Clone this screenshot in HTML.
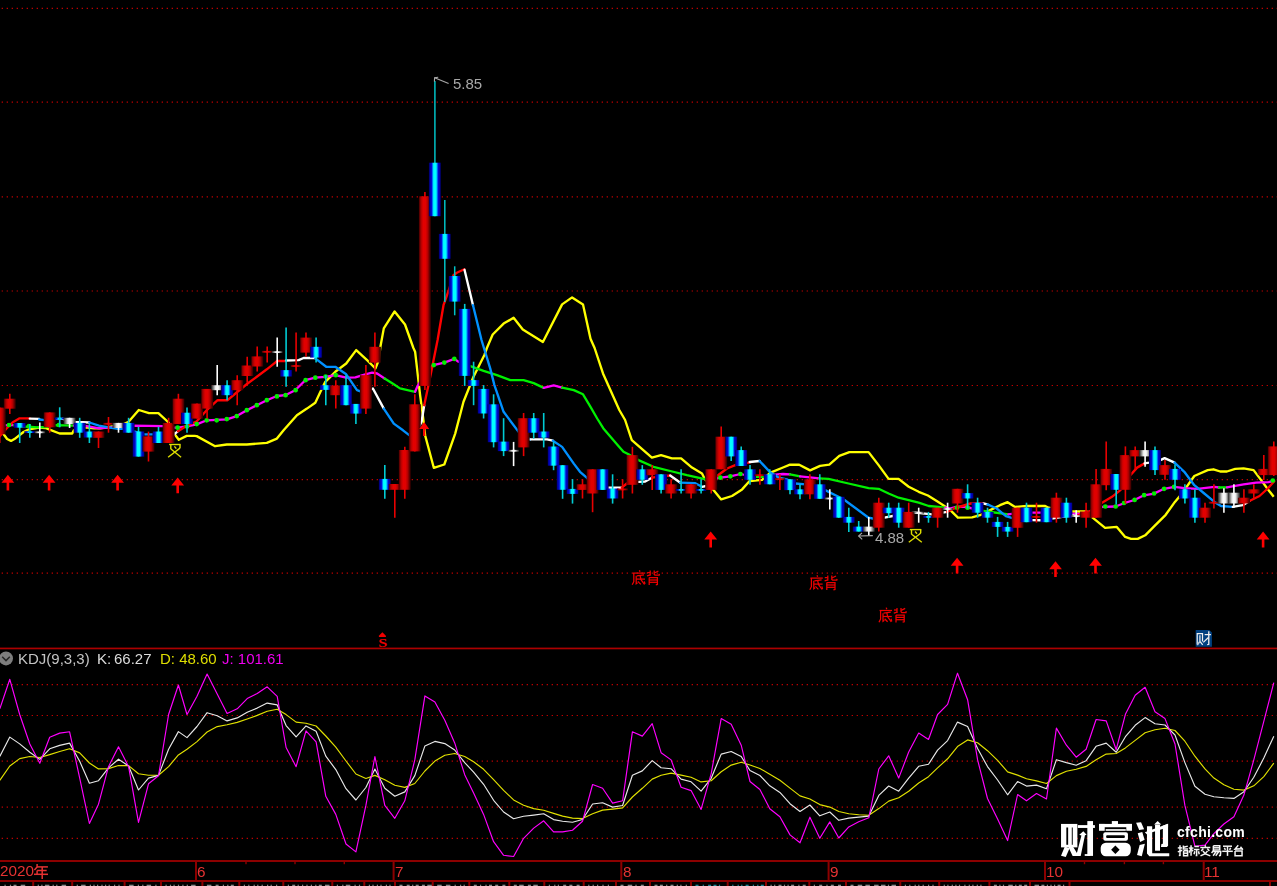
<!DOCTYPE html>
<html><head><meta charset="utf-8"><title>chart</title>
<style>
html,body{margin:0;padding:0;background:#000;overflow:hidden}
body{width:1277px;height:886px;position:relative;font-family:"Liberation Sans",sans-serif}
.t{position:absolute;white-space:pre;line-height:1;font-size:15px;will-change:transform;transform:translateZ(0)}
</style></head><body>
<svg width="1277" height="886" viewBox="0 0 1277 886" style="position:absolute;left:0;top:0">
<defs>
<linearGradient id="gr" x1="0" x2="1" y1="0" y2="0"><stop offset="0" stop-color="#300000"/><stop offset="0.1" stop-color="#880000"/><stop offset="0.25" stop-color="#c80000"/><stop offset="0.38" stop-color="#e20000"/><stop offset="0.57" stop-color="#e00000"/><stop offset="0.74" stop-color="#b00000"/><stop offset="0.89" stop-color="#600000"/><stop offset="1" stop-color="#280000"/></linearGradient>
<linearGradient id="gb" x1="0" x2="1" y1="0" y2="0"><stop offset="0" stop-color="#000040"/><stop offset="0.08" stop-color="#0000a0"/><stop offset="0.22" stop-color="#0008d4"/><stop offset="0.33" stop-color="#00a0ff"/><stop offset="0.4" stop-color="#00ffff"/><stop offset="0.6" stop-color="#00ffff"/><stop offset="0.68" stop-color="#0098ff"/><stop offset="0.78" stop-color="#0008d0"/><stop offset="0.92" stop-color="#0000a0"/><stop offset="1" stop-color="#000040"/></linearGradient>
<linearGradient id="gw" x1="0" x2="1" y1="0" y2="0"><stop offset="0" stop-color="#202020"/><stop offset="0.15" stop-color="#707070"/><stop offset="0.35" stop-color="#e8e8e8"/><stop offset="0.5" stop-color="#ffffff"/><stop offset="0.65" stop-color="#e8e8e8"/><stop offset="0.85" stop-color="#707070"/><stop offset="1" stop-color="#202020"/></linearGradient>
</defs>
<rect width="1277" height="886" fill="#000"/>
<line x1="1.7" x2="1277" y1="8.35" y2="8.35" stroke="#d00000" stroke-width="1.2" stroke-dasharray="1.2 3.8"/>
<line x1="1.7" x2="1277" y1="102.10" y2="102.10" stroke="#d00000" stroke-width="1.2" stroke-dasharray="1.2 3.8"/>
<line x1="1.7" x2="1277" y1="196.90" y2="196.90" stroke="#d00000" stroke-width="1.2" stroke-dasharray="1.2 3.8"/>
<line x1="1.7" x2="1277" y1="291.00" y2="291.00" stroke="#d00000" stroke-width="1.2" stroke-dasharray="1.2 3.8"/>
<line x1="1.7" x2="1277" y1="385.50" y2="385.50" stroke="#d00000" stroke-width="1.2" stroke-dasharray="1.2 3.8"/>
<line x1="1.7" x2="1277" y1="479.60" y2="479.60" stroke="#d00000" stroke-width="1.2" stroke-dasharray="1.2 3.8"/>
<line x1="1.7" x2="1277" y1="573.20" y2="573.20" stroke="#d00000" stroke-width="1.2" stroke-dasharray="1.2 3.8"/>
<line x1="1.7" x2="1277" y1="684.60" y2="684.60" stroke="#d00000" stroke-width="1.2" stroke-dasharray="1.2 3.8"/>
<line x1="1.7" x2="1277" y1="715.50" y2="715.50" stroke="#d00000" stroke-width="1.2" stroke-dasharray="1.2 3.8"/>
<line x1="1.7" x2="1277" y1="761.10" y2="761.10" stroke="#d00000" stroke-width="1.2" stroke-dasharray="1.2 3.8"/>
<line x1="1.7" x2="1277" y1="807.20" y2="807.20" stroke="#d00000" stroke-width="1.2" stroke-dasharray="1.2 3.8"/>
<line x1="1.7" x2="1277" y1="838.40" y2="838.40" stroke="#d00000" stroke-width="1.2" stroke-dasharray="1.2 3.8"/>
<polyline points="0.0,432.0 3.1,433.5 7.1,439.0 11.0,440.9 15.7,438.2 23.5,432.0 29.0,429.3 39.2,427.7 45.5,428.0 50.2,429.9 59.6,433.5 72.2,433.5 73.7,430.4 85.5,427.3 94.1,428.4 100.4,428.4 109.8,426.8 123.9,424.1 128.6,421.8 138.8,410.0 149.0,413.1 158.4,413.1 168.6,422.5 174.1,433.5 178.8,439.8 186.7,435.9 194.5,435.9 196.7,436.1 215.1,446.2 226.8,444.5 246.8,444.5 266.8,442.8 276.9,438.6 283.6,430.3 296.9,415.2 306.9,408.6 315.3,402.7 320.3,391.9 325.3,381.8 335.3,371.8 346.2,363.5 356.2,350.1 367.1,360.1 375.4,368.5 378.8,360.1 380.4,346.8 383.8,328.4 394.6,311.4 405.0,324.5 413.4,348.0 415.1,351.7 417.6,373.4 420.1,395.1 422.6,413.5 425.1,435.2 433.8,467.8 444.3,464.5 455.2,433.6 463.5,401.8 473.5,376.8 484.4,355.0 486.9,348.0 492.7,334.5 503.6,323.6 513.6,317.8 522.8,329.5 542.9,342.0 562.1,304.4 572.1,297.4 583.0,304.4 590.5,338.7 594.6,348.0 603.0,373.4 619.3,410.0 625.1,420.0 631.8,440.1 651.9,457.6 661.0,455.1 671.9,458.4 681.1,458.4 692.0,467.6 702.0,473.5 704.5,478.5 713.7,490.2 721.2,499.4 732.0,496.0 742.1,489.4 749.6,481.0 762.1,479.8 770.5,472.6 783.0,467.5 790.0,464.7 799.2,464.7 810.1,470.4 820.1,465.9 829.3,464.7 839.3,455.9 849.4,452.1 868.6,452.1 878.6,465.1 888.6,478.9 898.6,478.9 908.7,486.8 918.7,491.8 927.9,495.5 937.9,501.8 947.1,507.7 952.1,511.9 957.9,517.7 972.1,517.4 980.0,515.2 991.7,509.4 1000.0,505.2 1007.6,502.2 1015.1,506.9 1026.8,506.0 1045.2,506.0 1048.5,507.7 1071.9,511.5 1086.9,511.5 1092.6,517.7 1105.1,527.8 1116.8,526.9 1125.2,536.9 1131.0,538.9 1137.7,538.9 1145.2,535.3 1153.6,526.9 1165.7,514.8 1174.9,501.9 1182.6,492.7 1194.3,476.0 1207.7,470.1 1213.5,469.3 1220.2,471.5 1226.9,471.5 1235.2,468.8 1243.6,468.4 1253.6,470.1 1261.1,480.1 1268.6,490.2 1273.7,496.8" fill="none" stroke="#ffff00" stroke-width="2.35" stroke-linejoin="round"/>
<polyline points="0.0,425.4 14.0,425.2" fill="none" stroke="#ff00ff" stroke-width="2.3" stroke-linejoin="round" stroke-linecap="round"/>
<polyline points="14.0,425.2 23.5,426.5 38.0,427.3 45.0,427.0 56.0,425.2 74.0,425.7" fill="none" stroke="#00f000" stroke-width="2.3" stroke-linejoin="round" stroke-linecap="round"/>
<polyline points="74.0,425.7 84.0,425.7 99.0,428.4 108.0,427.7 120.0,426.5 133.0,425.7 163.0,426.2 172.0,427.5 177.6,427.7 187.0,426.5 196.7,424.4 206.7,420.3 226.8,419.4 236.8,416.1 246.8,410.2 256.8,405.2 266.8,400.2 276.9,396.0 285.2,395.2 295.2,390.2 305.3,380.2 315.3,377.7 325.3,376.8 335.3,375.2 346.2,377.7 355.4,377.3 365.4,374.3 372.1,372.6 377.1,373.5 384.6,378.5" fill="none" stroke="#ff00ff" stroke-width="2.3" stroke-linejoin="round" stroke-linecap="round"/>
<polyline points="384.6,378.5 393.8,384.3 400.0,388.4 415.1,391.8" fill="none" stroke="#00f000" stroke-width="2.3" stroke-linejoin="round" stroke-linecap="round"/>
<polyline points="415.1,391.8 417.6,386.0 424.0,375.0 430.9,366.7 433.4,365.1 444.3,362.6 454.3,358.9 458.5,361.7 464.0,364.0" fill="none" stroke="#ff00ff" stroke-width="2.3" stroke-linejoin="round" stroke-linecap="round"/>
<polyline points="464.0,364.0 471.0,366.4 483.6,370.9 496.9,375.1 510.3,380.1 523.6,380.1 533.7,383.1 543.7,387.9" fill="none" stroke="#00f000" stroke-width="2.3" stroke-linejoin="round" stroke-linecap="round"/>
<polyline points="543.7,387.9 553.7,385.4 562.1,387.6" fill="none" stroke="#ff00ff" stroke-width="2.3" stroke-linejoin="round" stroke-linecap="round"/>
<polyline points="562.1,387.6 573.8,390.1 583.0,394.3 590.5,406.8 597.2,418.5 603.4,428.4 618.4,445.9 623.5,451.8 628.5,454.3 638.5,460.1 653.5,466.8 670.2,471.0 686.9,475.2 703.6,478.8 712.0,479.0" fill="none" stroke="#00f000" stroke-width="2.3" stroke-linejoin="round" stroke-linecap="round"/>
<polyline points="712.0,479.0 720.4,477.7 730.4,476.3 740.4,474.0 745.0,475.0" fill="none" stroke="#ff00ff" stroke-width="2.3" stroke-linejoin="round" stroke-linecap="round"/>
<polyline points="745.0,475.0 755.4,476.8 763.8,476.8 770.0,475.5" fill="none" stroke="#00f000" stroke-width="2.3" stroke-linejoin="round" stroke-linecap="round"/>
<polyline points="770.0,475.5 777.2,474.3 783.0,474.0 790.0,474.3" fill="none" stroke="#ff00ff" stroke-width="2.3" stroke-linejoin="round" stroke-linecap="round"/>
<polyline points="790.0,474.3 800.1,476.4" fill="none" stroke="#00f000" stroke-width="2.3" stroke-linejoin="round" stroke-linecap="round"/>
<polyline points="800.1,476.4 819.3,478.4" fill="none" stroke="#ff00ff" stroke-width="2.3" stroke-linejoin="round" stroke-linecap="round"/>
<polyline points="819.3,478.4 828.5,478.8 848.5,483.5 868.6,488.1 878.6,488.8 888.6,493.5 898.6,497.7 918.7,502.7 928.7,506.0 945.4,507.7" fill="none" stroke="#00f000" stroke-width="2.3" stroke-linejoin="round" stroke-linecap="round"/>
<polyline points="945.4,507.7 949.6,508.5 955.4,507.2 963.0,506.5 975.0,509.0 983.4,511.0" fill="none" stroke="#ff00ff" stroke-width="2.3" stroke-linejoin="round" stroke-linecap="round"/>
<polyline points="983.4,511.0 1008.4,514.4" fill="none" stroke="#00f000" stroke-width="2.3" stroke-linejoin="round" stroke-linecap="round"/>
<polyline points="1008.4,514.4 1011.8,513.9 1031.8,512.7 1041.8,512.7 1071.9,513.6 1080.3,513.9 1092.0,511.0 1102.4,506.9 1115.5,506.5 1124.0,503.2 1134.4,500.0 1144.0,495.3 1154.0,493.6 1164.0,488.8 1174.4,486.8 1184.3,488.2 1197.6,488.8 1214.4,486.8 1219.0,487.5" fill="none" stroke="#ff00ff" stroke-width="2.3" stroke-linejoin="round" stroke-linecap="round"/>
<polyline points="1219.0,487.5 1227.0,487.3" fill="none" stroke="#00f000" stroke-width="2.3" stroke-linejoin="round" stroke-linecap="round"/>
<polyline points="1227.0,487.3 1243.6,484.3 1256.1,482.6 1268.6,482.1 1273.8,480.8" fill="none" stroke="#ff00ff" stroke-width="2.3" stroke-linejoin="round" stroke-linecap="round"/>
<polyline points="0.0,435.9 6.3,428.8 12.5,422.5 19.6,418.3 29.8,418.3" fill="none" stroke="#ff0000" stroke-width="2.35" stroke-linejoin="round" stroke-linecap="round"/>
<polyline points="29.8,418.6 39.2,418.9" fill="none" stroke="#ffffff" stroke-width="2.35" stroke-linejoin="round" stroke-linecap="round"/>
<polyline points="39.2,419.5 44.7,420.2 55.2,418.9 62.7,418.9" fill="none" stroke="#0090ff" stroke-width="2.35" stroke-linejoin="round" stroke-linecap="round"/>
<polyline points="62.7,418.9 75.3,421.8 89.4,422.5" fill="none" stroke="#ffffff" stroke-width="2.35" stroke-linejoin="round" stroke-linecap="round"/>
<polyline points="89.4,422.5 98.8,425.7 117.6,428.8 123.9,428.8 134.0,431.5 144.3,434.3 152.9,434.3 163.0,434.3" fill="none" stroke="#0090ff" stroke-width="2.35" stroke-linejoin="round" stroke-linecap="round"/>
<polyline points="163.0,434.3 174.1,434.3 178.0,431.2" fill="none" stroke="#ffffff" stroke-width="2.35" stroke-linejoin="round" stroke-linecap="round"/>
<polyline points="178.0,431.2 186.7,425.7 196.5,421.5 206.7,410.2 217.6,400.2 227.6,400.2 238.4,391.0 247.6,383.5 256.8,376.8 266.8,369.3 275.2,362.6 276.9,361.0 286.0,361.0" fill="none" stroke="#ff0000" stroke-width="2.35" stroke-linejoin="round" stroke-linecap="round"/>
<polyline points="286.0,360.5 298.6,360.1 303.6,358.0 315.3,358.0" fill="none" stroke="#ffffff" stroke-width="2.35" stroke-linejoin="round" stroke-linecap="round"/>
<polyline points="315.3,358.4 326.2,366.8 335.3,366.8 346.2,374.3 357.0,390.2 360.4,391.4 366.0,391.0" fill="none" stroke="#0090ff" stroke-width="2.35" stroke-linejoin="round" stroke-linecap="round"/>
<polyline points="366.0,391.0 372.9,388.5 383.8,408.6" fill="none" stroke="#ffffff" stroke-width="2.35" stroke-linejoin="round" stroke-linecap="round"/>
<polyline points="383.8,408.6 393.8,423.6 403.0,430.3 409.2,435.2 414.8,437.0" fill="none" stroke="#0090ff" stroke-width="2.35" stroke-linejoin="round" stroke-linecap="round"/>
<polyline points="414.8,437.0 421.7,421.0 424.2,405.2" fill="none" stroke="#ffffff" stroke-width="2.35" stroke-linejoin="round" stroke-linecap="round"/>
<polyline points="424.2,405.2 430.9,373.4 437.6,340.0 443.5,305.2 448.5,291.0 453.5,275.2 456.8,272.7 464.3,269.3" fill="none" stroke="#ff0000" stroke-width="2.35" stroke-linejoin="round" stroke-linecap="round"/>
<polyline points="464.5,269.8 473.0,305.2" fill="none" stroke="#ffffff" stroke-width="2.35" stroke-linejoin="round" stroke-linecap="round"/>
<polyline points="473.0,305.2 481.5,340.0 490.2,368.4 494.4,385.1 503.6,411.8 518.6,431.9 530.3,439.4" fill="none" stroke="#0090ff" stroke-width="2.35" stroke-linejoin="round" stroke-linecap="round"/>
<polyline points="530.3,439.4 547.0,439.4 552.9,440.7" fill="none" stroke="#ffffff" stroke-width="2.35" stroke-linejoin="round" stroke-linecap="round"/>
<polyline points="552.9,440.7 562.1,446.9 573.8,463.6 580.0,471.8 586.7,477.7 596.0,484.0 607.0,487.7" fill="none" stroke="#0090ff" stroke-width="2.35" stroke-linejoin="round" stroke-linecap="round"/>
<polyline points="607.0,487.7 621.8,487.7" fill="none" stroke="#ffffff" stroke-width="2.35" stroke-linejoin="round" stroke-linecap="round"/>
<polyline points="621.8,487.7 626.8,483.5 632.0,482.0" fill="none" stroke="#ff0000" stroke-width="2.35" stroke-linejoin="round" stroke-linecap="round"/>
<polyline points="632.0,482.0 638.5,481.8 645.2,481.5 651.9,477.7" fill="none" stroke="#ffffff" stroke-width="2.35" stroke-linejoin="round" stroke-linecap="round"/>
<polyline points="651.9,477.7 661.0,476.5 670.2,475.5" fill="none" stroke="#ff0000" stroke-width="2.35" stroke-linejoin="round" stroke-linecap="round"/>
<polyline points="670.2,475.5 680.3,482.7" fill="none" stroke="#ffffff" stroke-width="2.35" stroke-linejoin="round" stroke-linecap="round"/>
<polyline points="680.3,482.7 695.3,483.2 702.0,486.8" fill="none" stroke="#0090ff" stroke-width="2.35" stroke-linejoin="round" stroke-linecap="round"/>
<polyline points="702.0,486.8 706.2,486.0 711.0,482.0" fill="none" stroke="#ffffff" stroke-width="2.35" stroke-linejoin="round" stroke-linecap="round"/>
<polyline points="711.0,482.0 717.0,476.0 727.0,468.5 737.1,464.3 749.6,462.6" fill="none" stroke="#ff0000" stroke-width="2.35" stroke-linejoin="round" stroke-linecap="round"/>
<polyline points="749.6,462.0 759.6,461.0" fill="none" stroke="#ffffff" stroke-width="2.35" stroke-linejoin="round" stroke-linecap="round"/>
<polyline points="759.6,461.0 770.5,472.6 778.8,477.7 786.7,479.3 795.1,483.5 805.9,484.3 815.0,487.0 825.1,490.1 843.5,499.3 868.6,517.7 872.7,518.5 878.0,519.0" fill="none" stroke="#0090ff" stroke-width="2.35" stroke-linejoin="round" stroke-linecap="round"/>
<polyline points="878.0,519.0 884.4,517.7 892.8,516.0 905.0,514.0 915.3,512.7 932.0,514.4 947.1,511.9" fill="none" stroke="#ffffff" stroke-width="2.35" stroke-linejoin="round" stroke-linecap="round"/>
<polyline points="947.1,511.9 953.8,508.5 970.5,503.5 983.4,503.5" fill="none" stroke="#ff0000" stroke-width="2.35" stroke-linejoin="round" stroke-linecap="round"/>
<polyline points="983.4,503.5 987.5,504.4" fill="none" stroke="#ffffff" stroke-width="2.35" stroke-linejoin="round" stroke-linecap="round"/>
<polyline points="987.5,504.4 996.7,508.5 1005.9,516.1 1010.9,517.7 1020.0,520.0" fill="none" stroke="#0090ff" stroke-width="2.35" stroke-linejoin="round" stroke-linecap="round"/>
<polyline points="1020.0,520.0 1031.8,520.2 1041.0,520.2 1055.0,518.0 1071.9,515.2 1076.9,516.1" fill="none" stroke="#ffffff" stroke-width="2.35" stroke-linejoin="round" stroke-linecap="round"/>
<polyline points="1076.9,516.1 1080.3,514.4 1090.3,511.0 1102.0,502.7 1112.0,496.8 1120.4,490.2 1130.4,475.1 1137.1,467.6 1144.6,463.4" fill="none" stroke="#ff0000" stroke-width="2.35" stroke-linejoin="round" stroke-linecap="round"/>
<polyline points="1144.6,463.4 1149.0,462.6 1160.4,460.1 1164.6,458.1 1174.6,462.6" fill="none" stroke="#ffffff" stroke-width="2.35" stroke-linejoin="round" stroke-linecap="round"/>
<polyline points="1174.6,462.6 1184.3,471.8 1194.3,485.2 1204.3,493.5 1214.4,501.9 1221.0,506.0 1232.7,506.9" fill="none" stroke="#0090ff" stroke-width="2.35" stroke-linejoin="round" stroke-linecap="round"/>
<polyline points="1232.7,506.9 1242.8,505.2 1249.4,501.0" fill="none" stroke="#ffffff" stroke-width="2.35" stroke-linejoin="round" stroke-linecap="round"/>
<polyline points="1249.4,501.0 1259.5,496.0 1267.8,488.5 1274.2,481.3" fill="none" stroke="#ff0000" stroke-width="2.35" stroke-linejoin="round" stroke-linecap="round"/>
<circle cx="9.0" cy="425.0" r="2.35" fill="#00f000"/>
<circle cx="29.0" cy="426.2" r="2.35" fill="#00f000"/>
<circle cx="58.8" cy="425.0" r="2.35" fill="#00f000"/>
<circle cx="177.6" cy="427.7" r="2.35" fill="#00f000"/>
<circle cx="187.0" cy="426.5" r="2.35" fill="#00f000"/>
<circle cx="196.7" cy="424.1" r="2.35" fill="#00f000"/>
<circle cx="206.7" cy="420.3" r="2.35" fill="#00f000"/>
<circle cx="216.7" cy="420.3" r="2.35" fill="#00f000"/>
<circle cx="226.8" cy="419.1" r="2.35" fill="#00f000"/>
<circle cx="236.8" cy="416.1" r="2.35" fill="#00f000"/>
<circle cx="246.8" cy="410.2" r="2.35" fill="#00f000"/>
<circle cx="256.8" cy="405.2" r="2.35" fill="#00f000"/>
<circle cx="266.8" cy="400.2" r="2.35" fill="#00f000"/>
<circle cx="276.9" cy="396.4" r="2.35" fill="#00f000"/>
<circle cx="285.6" cy="395.2" r="2.35" fill="#00f000"/>
<circle cx="295.6" cy="390.2" r="2.35" fill="#00f000"/>
<circle cx="305.6" cy="380.2" r="2.35" fill="#00f000"/>
<circle cx="315.3" cy="377.7" r="2.35" fill="#00f000"/>
<circle cx="325.6" cy="376.5" r="2.35" fill="#00f000"/>
<circle cx="335.8" cy="375.2" r="2.35" fill="#00f000"/>
<circle cx="433.8" cy="365.1" r="2.35" fill="#00f000"/>
<circle cx="444.3" cy="362.6" r="2.35" fill="#00f000"/>
<circle cx="454.3" cy="358.9" r="2.35" fill="#00f000"/>
<circle cx="720.4" cy="477.7" r="2.35" fill="#00f000"/>
<circle cx="730.4" cy="476.3" r="2.35" fill="#00f000"/>
<circle cx="740.4" cy="474.0" r="2.35" fill="#00f000"/>
<circle cx="957.1" cy="507.7" r="2.35" fill="#00f000"/>
<circle cx="967.6" cy="507.7" r="2.35" fill="#00f000"/>
<circle cx="1105.3" cy="506.5" r="2.35" fill="#00f000"/>
<circle cx="1115.7" cy="506.5" r="2.35" fill="#00f000"/>
<circle cx="1124.0" cy="503.0" r="2.35" fill="#00f000"/>
<circle cx="1134.6" cy="499.9" r="2.35" fill="#00f000"/>
<circle cx="1144.1" cy="495.2" r="2.35" fill="#00f000"/>
<circle cx="1154.1" cy="493.5" r="2.35" fill="#00f000"/>
<circle cx="1164.1" cy="488.8" r="2.35" fill="#00f000"/>
<circle cx="1174.1" cy="486.8" r="2.35" fill="#00f000"/>
<circle cx="1272.8" cy="480.5" r="2.35" fill="#00f000"/>
<line x1="-0.2" x2="-0.2" y1="407.6" y2="443.0" stroke="#e80000" stroke-width="1.6"/>
<rect x="-6.2" y="407.6" width="12.0" height="26.7" fill="url(#gr)"/>
<line x1="9.8" x2="9.8" y1="393.8" y2="413.9" stroke="#e80000" stroke-width="1.6"/>
<rect x="3.8" y="398.7" width="12.0" height="10.0" fill="url(#gr)"/>
<line x1="19.7" x2="19.7" y1="423.0" y2="443.0" stroke="#00ccd4" stroke-width="1.6"/>
<rect x="13.7" y="423.0" width="12.0" height="4.7" fill="url(#gb)"/>
<line x1="29.8" x2="29.8" y1="424.0" y2="437.8" stroke="#00ccd4" stroke-width="1.6"/>
<rect x="24.4" y="431.2" width="10.8" height="1.8" fill="url(#gb)"/>
<line x1="29.8" x2="29.8" y1="430.9" y2="433.2" stroke="#00ccd4" stroke-width="1.6"/>
<line x1="39.8" x2="39.8" y1="422.5" y2="437.8" stroke="#ffffff" stroke-width="1.6"/>
<rect x="34.4" y="431.4" width="10.8" height="1.8" fill="url(#gw)"/>
<line x1="39.8" x2="39.8" y1="431.1" y2="433.5" stroke="#ffffff" stroke-width="1.6"/>
<line x1="49.7" x2="49.7" y1="412.4" y2="432.7" stroke="#e80000" stroke-width="1.6"/>
<rect x="43.7" y="412.4" width="12.0" height="14.9" fill="url(#gr)"/>
<line x1="59.7" x2="59.7" y1="407.3" y2="427.3" stroke="#00ccd4" stroke-width="1.6"/>
<rect x="54.3" y="417.7" width="10.8" height="1.8" fill="url(#gb)"/>
<line x1="59.7" x2="59.7" y1="417.4" y2="419.8" stroke="#00ccd4" stroke-width="1.6"/>
<line x1="69.6" x2="69.6" y1="417.8" y2="428.0" stroke="#ffffff" stroke-width="1.6"/>
<rect x="63.6" y="417.8" width="12.0" height="6.3" fill="url(#gw)"/>
<line x1="79.7" x2="79.7" y1="417.8" y2="437.8" stroke="#00ccd4" stroke-width="1.6"/>
<rect x="73.7" y="422.9" width="12.0" height="9.8" fill="url(#gb)"/>
<line x1="89.4" x2="89.4" y1="424.1" y2="443.0" stroke="#00ccd4" stroke-width="1.6"/>
<rect x="83.4" y="431.5" width="12.0" height="6.0" fill="url(#gb)"/>
<line x1="98.5" x2="98.5" y1="431.5" y2="448.0" stroke="#e80000" stroke-width="1.6"/>
<rect x="92.5" y="431.5" width="12.0" height="6.3" fill="url(#gr)"/>
<line x1="108.5" x2="108.5" y1="417.0" y2="432.7" stroke="#e80000" stroke-width="1.6"/>
<rect x="103.1" y="422.9" width="10.8" height="1.8" fill="url(#gr)"/>
<line x1="108.5" x2="108.5" y1="422.6" y2="425.0" stroke="#e80000" stroke-width="1.6"/>
<line x1="118.5" x2="118.5" y1="422.9" y2="432.7" stroke="#ffffff" stroke-width="1.6"/>
<rect x="112.5" y="422.9" width="12.0" height="5.1" fill="url(#gw)"/>
<line x1="128.6" x2="128.6" y1="417.8" y2="432.7" stroke="#00ccd4" stroke-width="1.6"/>
<rect x="122.6" y="422.9" width="12.0" height="9.8" fill="url(#gb)"/>
<line x1="138.5" x2="138.5" y1="426.8" y2="456.6" stroke="#00ccd4" stroke-width="1.6"/>
<rect x="132.5" y="431.5" width="12.0" height="25.1" fill="url(#gb)"/>
<line x1="148.5" x2="148.5" y1="431.6" y2="461.5" stroke="#e80000" stroke-width="1.6"/>
<rect x="142.5" y="436.4" width="12.0" height="15.2" fill="url(#gr)"/>
<line x1="158.5" x2="158.5" y1="426.8" y2="443.0" stroke="#00ccd4" stroke-width="1.6"/>
<rect x="152.5" y="431.5" width="12.0" height="11.5" fill="url(#gb)"/>
<line x1="168.6" x2="168.6" y1="417.8" y2="443.0" stroke="#e80000" stroke-width="1.6"/>
<rect x="162.6" y="422.9" width="12.0" height="20.1" fill="url(#gr)"/>
<line x1="178.4" x2="178.4" y1="393.8" y2="424.0" stroke="#e80000" stroke-width="1.6"/>
<rect x="172.4" y="398.7" width="12.0" height="25.3" fill="url(#gr)"/>
<line x1="187.0" x2="187.0" y1="407.6" y2="432.7" stroke="#00ccd4" stroke-width="1.6"/>
<rect x="181.0" y="412.7" width="12.0" height="11.3" fill="url(#gb)"/>
<line x1="197.0" x2="197.0" y1="403.6" y2="418.6" stroke="#e80000" stroke-width="1.6"/>
<rect x="191.0" y="403.6" width="12.0" height="15.0" fill="url(#gr)"/>
<line x1="207.1" x2="207.1" y1="388.9" y2="418.6" stroke="#e80000" stroke-width="1.6"/>
<rect x="201.1" y="388.9" width="12.0" height="19.7" fill="url(#gr)"/>
<line x1="217.2" x2="217.2" y1="365.1" y2="395.2" stroke="#ffffff" stroke-width="1.6"/>
<rect x="211.2" y="385.2" width="12.0" height="5.0" fill="url(#gw)"/>
<line x1="227.1" x2="227.1" y1="380.2" y2="400.2" stroke="#00ccd4" stroke-width="1.6"/>
<rect x="221.1" y="385.2" width="12.0" height="10.0" fill="url(#gb)"/>
<line x1="237.2" x2="237.2" y1="375.2" y2="405.2" stroke="#e80000" stroke-width="1.6"/>
<rect x="231.2" y="380.2" width="12.0" height="10.0" fill="url(#gr)"/>
<line x1="247.2" x2="247.2" y1="356.8" y2="382.7" stroke="#e80000" stroke-width="1.6"/>
<rect x="241.2" y="365.5" width="12.0" height="10.5" fill="url(#gr)"/>
<line x1="257.2" x2="257.2" y1="346.4" y2="371.5" stroke="#e80000" stroke-width="1.6"/>
<rect x="251.2" y="356.4" width="12.0" height="10.1" fill="url(#gr)"/>
<line x1="267.2" x2="267.2" y1="346.4" y2="362.6" stroke="#e80000" stroke-width="1.6"/>
<rect x="261.8" y="350.9" width="10.8" height="1.8" fill="url(#gr)"/>
<line x1="267.2" x2="267.2" y1="350.6" y2="353.0" stroke="#e80000" stroke-width="1.6"/>
<line x1="277.2" x2="277.2" y1="337.6" y2="366.8" stroke="#ffffff" stroke-width="1.6"/>
<rect x="271.8" y="351.2" width="10.8" height="1.8" fill="url(#gw)"/>
<line x1="277.2" x2="277.2" y1="350.9" y2="353.3" stroke="#ffffff" stroke-width="1.6"/>
<line x1="286.1" x2="286.1" y1="327.5" y2="386.8" stroke="#00ccd4" stroke-width="1.6"/>
<rect x="280.1" y="370.1" width="12.0" height="6.4" fill="url(#gb)"/>
<line x1="296.1" x2="296.1" y1="332.6" y2="371.5" stroke="#e80000" stroke-width="1.6"/>
<rect x="290.7" y="365.1" width="10.8" height="1.8" fill="url(#gr)"/>
<line x1="296.1" x2="296.1" y1="364.8" y2="367.2" stroke="#e80000" stroke-width="1.6"/>
<line x1="306.0" x2="306.0" y1="332.6" y2="356.8" stroke="#e80000" stroke-width="1.6"/>
<rect x="300.0" y="337.6" width="12.0" height="15.0" fill="url(#gr)"/>
<line x1="316.1" x2="316.1" y1="337.6" y2="362.6" stroke="#00ccd4" stroke-width="1.6"/>
<rect x="310.1" y="346.8" width="12.0" height="10.8" fill="url(#gb)"/>
<line x1="325.8" x2="325.8" y1="375.2" y2="405.2" stroke="#00ccd4" stroke-width="1.6"/>
<rect x="319.8" y="385.2" width="12.0" height="4.7" fill="url(#gb)"/>
<line x1="335.8" x2="335.8" y1="380.2" y2="408.6" stroke="#e80000" stroke-width="1.6"/>
<rect x="329.8" y="385.5" width="12.0" height="9.7" fill="url(#gr)"/>
<line x1="346.0" x2="346.0" y1="375.2" y2="405.2" stroke="#00ccd4" stroke-width="1.6"/>
<rect x="340.0" y="385.2" width="12.0" height="20.0" fill="url(#gb)"/>
<line x1="355.9" x2="355.9" y1="403.9" y2="423.9" stroke="#00ccd4" stroke-width="1.6"/>
<rect x="349.9" y="403.9" width="12.0" height="9.7" fill="url(#gb)"/>
<line x1="365.9" x2="365.9" y1="365.1" y2="413.9" stroke="#e80000" stroke-width="1.6"/>
<rect x="359.9" y="375.2" width="12.0" height="33.4" fill="url(#gr)"/>
<line x1="374.9" x2="374.9" y1="332.6" y2="386.8" stroke="#e80000" stroke-width="1.6"/>
<rect x="368.9" y="346.8" width="12.0" height="15.8" fill="url(#gr)"/>
<line x1="384.8" x2="384.8" y1="465.1" y2="498.8" stroke="#00ccd4" stroke-width="1.6"/>
<rect x="378.8" y="478.9" width="12.0" height="10.9" fill="url(#gb)"/>
<line x1="394.8" x2="394.8" y1="484.0" y2="517.7" stroke="#e80000" stroke-width="1.6"/>
<rect x="388.8" y="484.0" width="12.0" height="5.8" fill="url(#gr)"/>
<line x1="404.8" x2="404.8" y1="446.7" y2="498.8" stroke="#e80000" stroke-width="1.6"/>
<rect x="398.8" y="450.0" width="12.0" height="39.8" fill="url(#gr)"/>
<line x1="414.8" x2="414.8" y1="394.3" y2="451.4" stroke="#e80000" stroke-width="1.6"/>
<rect x="408.8" y="404.3" width="12.0" height="47.1" fill="url(#gr)"/>
<line x1="424.9" x2="424.9" y1="192.0" y2="390.1" stroke="#e80000" stroke-width="1.6"/>
<rect x="418.9" y="196.3" width="12.0" height="189.6" fill="url(#gr)"/>
<line x1="434.9" x2="434.9" y1="80.9" y2="216.2" stroke="#00c2c6" stroke-width="1.5"/>
<rect x="428.9" y="162.7" width="12.0" height="53.5" fill="url(#gb)"/>
<line x1="444.8" x2="444.8" y1="200.0" y2="301.9" stroke="#00c2c6" stroke-width="1.5"/>
<rect x="438.8" y="233.9" width="12.0" height="24.9" fill="url(#gb)"/>
<line x1="454.7" x2="454.7" y1="266.3" y2="315.3" stroke="#00c2c6" stroke-width="1.5"/>
<rect x="448.7" y="276.0" width="12.0" height="25.6" fill="url(#gb)"/>
<line x1="464.7" x2="464.7" y1="303.9" y2="385.9" stroke="#00ccd4" stroke-width="1.6"/>
<rect x="458.7" y="308.9" width="12.0" height="67.0" fill="url(#gb)"/>
<line x1="473.6" x2="473.6" y1="361.7" y2="405.2" stroke="#00ccd4" stroke-width="1.6"/>
<rect x="467.6" y="380.1" width="12.0" height="5.8" fill="url(#gb)"/>
<line x1="483.6" x2="483.6" y1="385.1" y2="418.5" stroke="#00ccd4" stroke-width="1.6"/>
<rect x="477.6" y="388.9" width="12.0" height="24.6" fill="url(#gb)"/>
<line x1="493.6" x2="493.6" y1="394.3" y2="447.4" stroke="#00ccd4" stroke-width="1.6"/>
<rect x="487.6" y="404.3" width="12.0" height="37.9" fill="url(#gb)"/>
<line x1="503.6" x2="503.6" y1="418.2" y2="456.1" stroke="#00ccd4" stroke-width="1.6"/>
<rect x="497.6" y="441.6" width="12.0" height="9.5" fill="url(#gb)"/>
<line x1="513.6" x2="513.6" y1="441.9" y2="466.1" stroke="#ffffff" stroke-width="1.6"/>
<rect x="508.2" y="449.9" width="10.8" height="1.8" fill="url(#gw)"/>
<line x1="513.6" x2="513.6" y1="449.6" y2="452.0" stroke="#ffffff" stroke-width="1.6"/>
<line x1="523.6" x2="523.6" y1="413.0" y2="456.1" stroke="#e80000" stroke-width="1.6"/>
<rect x="517.6" y="418.2" width="12.0" height="29.2" fill="url(#gr)"/>
<line x1="533.7" x2="533.7" y1="413.0" y2="438.6" stroke="#00ccd4" stroke-width="1.6"/>
<rect x="527.7" y="418.2" width="12.0" height="14.5" fill="url(#gb)"/>
<line x1="543.7" x2="543.7" y1="413.0" y2="447.4" stroke="#00ccd4" stroke-width="1.6"/>
<rect x="537.7" y="431.5" width="12.0" height="6.2" fill="url(#gb)"/>
<line x1="553.6" x2="553.6" y1="441.8" y2="470.2" stroke="#00ccd4" stroke-width="1.6"/>
<rect x="547.6" y="446.5" width="12.0" height="19.2" fill="url(#gb)"/>
<line x1="562.6" x2="562.6" y1="465.2" y2="498.8" stroke="#00ccd4" stroke-width="1.6"/>
<rect x="556.6" y="465.2" width="12.0" height="24.6" fill="url(#gb)"/>
<line x1="572.5" x2="572.5" y1="479.1" y2="503.6" stroke="#00ccd4" stroke-width="1.6"/>
<rect x="566.5" y="488.9" width="12.0" height="5.0" fill="url(#gb)"/>
<line x1="582.5" x2="582.5" y1="479.3" y2="498.5" stroke="#e80000" stroke-width="1.6"/>
<rect x="576.5" y="484.3" width="12.0" height="5.6" fill="url(#gr)"/>
<line x1="592.6" x2="592.6" y1="469.3" y2="512.2" stroke="#e80000" stroke-width="1.6"/>
<rect x="586.6" y="469.3" width="12.0" height="24.2" fill="url(#gr)"/>
<line x1="602.6" x2="602.6" y1="469.3" y2="489.9" stroke="#00ccd4" stroke-width="1.6"/>
<rect x="596.6" y="469.3" width="12.0" height="20.6" fill="url(#gb)"/>
<line x1="612.6" x2="612.6" y1="474.3" y2="503.6" stroke="#00ccd4" stroke-width="1.6"/>
<rect x="606.6" y="488.5" width="12.0" height="10.0" fill="url(#gb)"/>
<line x1="622.6" x2="622.6" y1="479.3" y2="498.5" stroke="#e80000" stroke-width="1.6"/>
<rect x="617.2" y="488.5" width="10.8" height="1.8" fill="url(#gr)"/>
<line x1="622.6" x2="622.6" y1="488.2" y2="490.6" stroke="#e80000" stroke-width="1.6"/>
<line x1="632.4" x2="632.4" y1="446.8" y2="493.5" stroke="#e80000" stroke-width="1.6"/>
<rect x="626.4" y="455.1" width="12.0" height="29.7" fill="url(#gr)"/>
<line x1="642.3" x2="642.3" y1="465.1" y2="484.8" stroke="#00ccd4" stroke-width="1.6"/>
<rect x="636.3" y="469.3" width="12.0" height="10.5" fill="url(#gb)"/>
<line x1="652.2" x2="652.2" y1="465.1" y2="489.9" stroke="#e80000" stroke-width="1.6"/>
<rect x="646.2" y="469.3" width="12.0" height="5.9" fill="url(#gr)"/>
<line x1="661.1" x2="661.1" y1="474.3" y2="493.5" stroke="#00ccd4" stroke-width="1.6"/>
<rect x="655.1" y="474.3" width="12.0" height="15.6" fill="url(#gb)"/>
<line x1="671.1" x2="671.1" y1="479.3" y2="498.5" stroke="#e80000" stroke-width="1.6"/>
<rect x="665.1" y="484.3" width="12.0" height="9.2" fill="url(#gr)"/>
<line x1="681.1" x2="681.1" y1="469.3" y2="493.5" stroke="#00ccd4" stroke-width="1.6"/>
<rect x="675.7" y="489.0" width="10.8" height="1.8" fill="url(#gb)"/>
<line x1="681.1" x2="681.1" y1="488.7" y2="491.1" stroke="#00ccd4" stroke-width="1.6"/>
<line x1="691.1" x2="691.1" y1="484.3" y2="498.5" stroke="#e80000" stroke-width="1.6"/>
<rect x="685.1" y="484.3" width="12.0" height="9.2" fill="url(#gr)"/>
<line x1="701.1" x2="701.1" y1="479.3" y2="493.5" stroke="#00ccd4" stroke-width="1.6"/>
<rect x="695.7" y="489.0" width="10.8" height="1.8" fill="url(#gb)"/>
<line x1="701.1" x2="701.1" y1="488.7" y2="491.1" stroke="#00ccd4" stroke-width="1.6"/>
<line x1="711.2" x2="711.2" y1="469.3" y2="493.5" stroke="#e80000" stroke-width="1.6"/>
<rect x="705.2" y="469.3" width="12.0" height="20.6" fill="url(#gr)"/>
<line x1="721.2" x2="721.2" y1="426.4" y2="469.3" stroke="#e80000" stroke-width="1.6"/>
<rect x="715.2" y="436.7" width="12.0" height="32.6" fill="url(#gr)"/>
<line x1="731.2" x2="731.2" y1="436.7" y2="461.0" stroke="#00ccd4" stroke-width="1.6"/>
<rect x="725.2" y="436.7" width="12.0" height="19.7" fill="url(#gb)"/>
<line x1="741.2" x2="741.2" y1="446.4" y2="466.0" stroke="#00ccd4" stroke-width="1.6"/>
<rect x="735.2" y="450.1" width="12.0" height="15.9" fill="url(#gb)"/>
<line x1="750.0" x2="750.0" y1="465.1" y2="484.8" stroke="#00ccd4" stroke-width="1.6"/>
<rect x="744.0" y="469.3" width="12.0" height="10.5" fill="url(#gb)"/>
<line x1="759.9" x2="759.9" y1="469.3" y2="484.8" stroke="#e80000" stroke-width="1.6"/>
<rect x="754.5" y="474.3" width="10.8" height="1.8" fill="url(#gr)"/>
<line x1="759.9" x2="759.9" y1="474.0" y2="476.4" stroke="#e80000" stroke-width="1.6"/>
<line x1="769.8" x2="769.8" y1="469.3" y2="484.3" stroke="#00ccd4" stroke-width="1.6"/>
<rect x="763.8" y="474.3" width="12.0" height="10.0" fill="url(#gb)"/>
<line x1="779.9" x2="779.9" y1="474.3" y2="490.0" stroke="#e80000" stroke-width="1.6"/>
<rect x="774.5" y="478.2" width="10.8" height="1.8" fill="url(#gr)"/>
<line x1="779.9" x2="779.9" y1="477.9" y2="480.3" stroke="#e80000" stroke-width="1.6"/>
<line x1="790.0" x2="790.0" y1="479.3" y2="494.3" stroke="#00ccd4" stroke-width="1.6"/>
<rect x="784.0" y="479.3" width="12.0" height="10.8" fill="url(#gb)"/>
<line x1="800.0" x2="800.0" y1="484.3" y2="499.3" stroke="#00ccd4" stroke-width="1.6"/>
<rect x="794.0" y="489.3" width="12.0" height="5.0" fill="url(#gb)"/>
<line x1="809.9" x2="809.9" y1="474.3" y2="499.3" stroke="#e80000" stroke-width="1.6"/>
<rect x="803.9" y="479.3" width="12.0" height="15.0" fill="url(#gr)"/>
<line x1="819.8" x2="819.8" y1="474.3" y2="498.8" stroke="#00ccd4" stroke-width="1.6"/>
<rect x="813.8" y="484.3" width="12.0" height="14.5" fill="url(#gb)"/>
<line x1="829.8" x2="829.8" y1="489.3" y2="509.4" stroke="#ffffff" stroke-width="1.6"/>
<rect x="824.4" y="497.6" width="10.8" height="1.8" fill="url(#gw)"/>
<line x1="829.8" x2="829.8" y1="497.3" y2="499.7" stroke="#ffffff" stroke-width="1.6"/>
<line x1="838.8" x2="838.8" y1="496.8" y2="517.7" stroke="#00ccd4" stroke-width="1.6"/>
<rect x="832.8" y="496.8" width="12.0" height="20.9" fill="url(#gb)"/>
<line x1="848.8" x2="848.8" y1="507.7" y2="531.9" stroke="#00ccd4" stroke-width="1.6"/>
<rect x="842.8" y="516.9" width="12.0" height="5.8" fill="url(#gb)"/>
<line x1="858.7" x2="858.7" y1="521.0" y2="531.6" stroke="#00ccd4" stroke-width="1.6"/>
<rect x="852.7" y="526.6" width="12.0" height="5.0" fill="url(#gb)"/>
<line x1="868.8" x2="868.8" y1="516.9" y2="536.0" stroke="#ffffff" stroke-width="1.6"/>
<rect x="862.8" y="526.6" width="12.0" height="5.0" fill="url(#gw)"/>
<line x1="878.8" x2="878.8" y1="497.7" y2="531.6" stroke="#e80000" stroke-width="1.6"/>
<rect x="872.8" y="502.7" width="12.0" height="25.0" fill="url(#gr)"/>
<line x1="888.7" x2="888.7" y1="502.7" y2="517.7" stroke="#00ccd4" stroke-width="1.6"/>
<rect x="882.7" y="507.7" width="12.0" height="5.5" fill="url(#gb)"/>
<line x1="898.7" x2="898.7" y1="502.7" y2="527.7" stroke="#00ccd4" stroke-width="1.6"/>
<rect x="892.7" y="507.7" width="12.0" height="15.0" fill="url(#gb)"/>
<line x1="908.7" x2="908.7" y1="502.7" y2="527.7" stroke="#e80000" stroke-width="1.6"/>
<rect x="902.7" y="511.9" width="12.0" height="15.8" fill="url(#gr)"/>
<line x1="918.7" x2="918.7" y1="507.7" y2="522.7" stroke="#ffffff" stroke-width="1.6"/>
<rect x="913.3" y="511.8" width="10.8" height="1.8" fill="url(#gw)"/>
<line x1="918.7" x2="918.7" y1="511.5" y2="513.9" stroke="#ffffff" stroke-width="1.6"/>
<line x1="928.5" x2="928.5" y1="511.9" y2="522.7" stroke="#00ccd4" stroke-width="1.6"/>
<rect x="923.1" y="516.0" width="10.8" height="1.8" fill="url(#gb)"/>
<line x1="928.5" x2="928.5" y1="515.7" y2="518.1" stroke="#00ccd4" stroke-width="1.6"/>
<line x1="937.6" x2="937.6" y1="507.7" y2="527.7" stroke="#e80000" stroke-width="1.6"/>
<rect x="931.6" y="507.7" width="12.0" height="10.0" fill="url(#gr)"/>
<line x1="947.6" x2="947.6" y1="502.7" y2="517.7" stroke="#ffffff" stroke-width="1.6"/>
<rect x="942.2" y="508.1" width="10.8" height="1.8" fill="url(#gw)"/>
<line x1="947.6" x2="947.6" y1="507.8" y2="510.2" stroke="#ffffff" stroke-width="1.6"/>
<line x1="957.5" x2="957.5" y1="488.8" y2="512.7" stroke="#e80000" stroke-width="1.6"/>
<rect x="951.5" y="488.8" width="12.0" height="14.7" fill="url(#gr)"/>
<line x1="967.6" x2="967.6" y1="484.3" y2="508.5" stroke="#00ccd4" stroke-width="1.6"/>
<rect x="961.6" y="493.1" width="12.0" height="5.4" fill="url(#gb)"/>
<line x1="977.6" x2="977.6" y1="497.7" y2="517.7" stroke="#00ccd4" stroke-width="1.6"/>
<rect x="971.6" y="502.7" width="12.0" height="10.0" fill="url(#gb)"/>
<line x1="987.5" x2="987.5" y1="507.7" y2="522.7" stroke="#00ccd4" stroke-width="1.6"/>
<rect x="981.5" y="511.9" width="12.0" height="5.8" fill="url(#gb)"/>
<line x1="997.6" x2="997.6" y1="516.9" y2="536.9" stroke="#00ccd4" stroke-width="1.6"/>
<rect x="991.6" y="521.9" width="12.0" height="5.0" fill="url(#gb)"/>
<line x1="1007.6" x2="1007.6" y1="521.9" y2="536.9" stroke="#00ccd4" stroke-width="1.6"/>
<rect x="1001.6" y="526.9" width="12.0" height="4.7" fill="url(#gb)"/>
<line x1="1017.6" x2="1017.6" y1="507.7" y2="536.9" stroke="#e80000" stroke-width="1.6"/>
<rect x="1011.6" y="507.7" width="12.0" height="20.1" fill="url(#gr)"/>
<line x1="1026.5" x2="1026.5" y1="502.7" y2="522.2" stroke="#00ccd4" stroke-width="1.6"/>
<rect x="1020.5" y="507.7" width="12.0" height="14.5" fill="url(#gb)"/>
<line x1="1036.5" x2="1036.5" y1="502.7" y2="522.7" stroke="#e80000" stroke-width="1.6"/>
<rect x="1031.1" y="516.0" width="10.8" height="1.8" fill="url(#gr)"/>
<line x1="1036.5" x2="1036.5" y1="515.7" y2="518.1" stroke="#e80000" stroke-width="1.6"/>
<line x1="1046.5" x2="1046.5" y1="507.7" y2="522.2" stroke="#00ccd4" stroke-width="1.6"/>
<rect x="1040.5" y="507.7" width="12.0" height="14.5" fill="url(#gb)"/>
<line x1="1056.4" x2="1056.4" y1="492.7" y2="522.7" stroke="#e80000" stroke-width="1.6"/>
<rect x="1050.4" y="497.7" width="12.0" height="20.0" fill="url(#gr)"/>
<line x1="1066.4" x2="1066.4" y1="497.7" y2="522.7" stroke="#00ccd4" stroke-width="1.6"/>
<rect x="1060.4" y="502.7" width="12.0" height="15.0" fill="url(#gb)"/>
<line x1="1076.2" x2="1076.2" y1="510.2" y2="522.7" stroke="#ffffff" stroke-width="1.6"/>
<rect x="1070.8" y="515.2" width="10.8" height="1.8" fill="url(#gw)"/>
<line x1="1076.2" x2="1076.2" y1="514.9" y2="517.3" stroke="#ffffff" stroke-width="1.6"/>
<line x1="1086.1" x2="1086.1" y1="502.7" y2="527.8" stroke="#e80000" stroke-width="1.6"/>
<rect x="1080.1" y="511.5" width="12.0" height="6.2" fill="url(#gr)"/>
<line x1="1096.1" x2="1096.1" y1="468.9" y2="517.7" stroke="#e80000" stroke-width="1.6"/>
<rect x="1090.1" y="484.3" width="12.0" height="33.4" fill="url(#gr)"/>
<line x1="1106.2" x2="1106.2" y1="441.4" y2="490.2" stroke="#e80000" stroke-width="1.6"/>
<rect x="1100.2" y="468.9" width="12.0" height="16.3" fill="url(#gr)"/>
<line x1="1116.2" x2="1116.2" y1="474.0" y2="504.4" stroke="#00ccd4" stroke-width="1.6"/>
<rect x="1110.2" y="474.0" width="12.0" height="15.8" fill="url(#gb)"/>
<line x1="1125.4" x2="1125.4" y1="446.4" y2="503.5" stroke="#e80000" stroke-width="1.6"/>
<rect x="1119.4" y="455.1" width="12.0" height="34.7" fill="url(#gr)"/>
<line x1="1135.2" x2="1135.2" y1="446.4" y2="469.3" stroke="#e80000" stroke-width="1.6"/>
<rect x="1129.2" y="450.1" width="12.0" height="6.3" fill="url(#gr)"/>
<line x1="1145.1" x2="1145.1" y1="441.4" y2="466.8" stroke="#ffffff" stroke-width="1.6"/>
<rect x="1139.1" y="450.1" width="12.0" height="6.3" fill="url(#gw)"/>
<line x1="1155.0" x2="1155.0" y1="446.4" y2="475.1" stroke="#00ccd4" stroke-width="1.6"/>
<rect x="1149.0" y="450.1" width="12.0" height="20.0" fill="url(#gb)"/>
<line x1="1165.0" x2="1165.0" y1="460.1" y2="479.8" stroke="#e80000" stroke-width="1.6"/>
<rect x="1159.0" y="465.1" width="12.0" height="9.7" fill="url(#gr)"/>
<line x1="1175.0" x2="1175.0" y1="464.3" y2="490.2" stroke="#00ccd4" stroke-width="1.6"/>
<rect x="1169.0" y="468.9" width="12.0" height="10.9" fill="url(#gb)"/>
<line x1="1184.9" x2="1184.9" y1="484.3" y2="503.5" stroke="#00ccd4" stroke-width="1.6"/>
<rect x="1178.9" y="489.3" width="12.0" height="9.2" fill="url(#gb)"/>
<line x1="1194.9" x2="1194.9" y1="489.3" y2="522.7" stroke="#00ccd4" stroke-width="1.6"/>
<rect x="1188.9" y="497.7" width="12.0" height="20.0" fill="url(#gb)"/>
<line x1="1205.0" x2="1205.0" y1="502.7" y2="522.7" stroke="#e80000" stroke-width="1.6"/>
<rect x="1199.0" y="507.7" width="12.0" height="10.0" fill="url(#gr)"/>
<line x1="1213.9" x2="1213.9" y1="484.3" y2="508.5" stroke="#e80000" stroke-width="1.6"/>
<rect x="1208.5" y="501.8" width="10.8" height="1.8" fill="url(#gr)"/>
<line x1="1213.9" x2="1213.9" y1="501.5" y2="503.9" stroke="#e80000" stroke-width="1.6"/>
<line x1="1223.9" x2="1223.9" y1="488.2" y2="512.7" stroke="#ffffff" stroke-width="1.6"/>
<rect x="1217.9" y="492.7" width="12.0" height="10.8" fill="url(#gw)"/>
<line x1="1233.9" x2="1233.9" y1="484.3" y2="507.7" stroke="#ffffff" stroke-width="1.6"/>
<rect x="1227.9" y="492.7" width="12.0" height="10.8" fill="url(#gw)"/>
<line x1="1243.9" x2="1243.9" y1="489.3" y2="512.7" stroke="#e80000" stroke-width="1.6"/>
<rect x="1237.9" y="497.7" width="12.0" height="5.8" fill="url(#gr)"/>
<line x1="1253.8" x2="1253.8" y1="484.3" y2="498.5" stroke="#e80000" stroke-width="1.6"/>
<rect x="1247.8" y="489.3" width="12.0" height="4.2" fill="url(#gr)"/>
<line x1="1263.8" x2="1263.8" y1="455.1" y2="480.1" stroke="#e80000" stroke-width="1.6"/>
<rect x="1257.8" y="468.9" width="12.0" height="6.2" fill="url(#gr)"/>
<line x1="1273.8" x2="1273.8" y1="441.4" y2="476.0" stroke="#e80000" stroke-width="1.6"/>
<rect x="1267.8" y="446.4" width="12.0" height="28.7" fill="url(#gr)"/>
<path d="M7.9 474.7 L14.3 482.7 L9.2 482.7 L9.2 490.5 L6.6 490.5 L6.6 482.7 L1.5 482.7 Z" fill="#ff0000"/>
<path d="M49.1 474.7 L55.5 482.7 L50.4 482.7 L50.4 490.5 L47.8 490.5 L47.8 482.7 L42.7 482.7 Z" fill="#ff0000"/>
<path d="M117.6 474.7 L124.0 482.7 L118.9 482.7 L118.9 490.5 L116.3 490.5 L116.3 482.7 L111.2 482.7 Z" fill="#ff0000"/>
<path d="M177.7 477.5 L184.1 485.5 L179.0 485.5 L179.0 493.3 L176.4 493.3 L176.4 485.5 L171.3 485.5 Z" fill="#ff0000"/>
<path d="M710.7 531.6 L717.1 539.6 L712.0 539.6 L712.0 547.4 L709.4 547.4 L709.4 539.6 L704.3 539.6 Z" fill="#ff0000"/>
<path d="M957.1 557.8 L963.5 565.8 L958.4 565.8 L958.4 573.6 L955.8 573.6 L955.8 565.8 L950.7 565.8 Z" fill="#ff0000"/>
<path d="M1055.5 561.2 L1061.9 569.2 L1056.8 569.2 L1056.8 577.0 L1054.2 577.0 L1054.2 569.2 L1049.1 569.2 Z" fill="#ff0000"/>
<path d="M1095.5 557.8 L1101.9 565.8 L1096.8 565.8 L1096.8 573.6 L1094.2 573.6 L1094.2 565.8 L1089.1 565.8 Z" fill="#ff0000"/>
<path d="M1263.1 531.6 L1269.5 539.6 L1264.4 539.6 L1264.4 547.4 L1261.8 547.4 L1261.8 539.6 L1256.7 539.6 Z" fill="#ff0000"/>
<path d="M424.2 421.9 L429.2 428.9 L425.3 428.9 L425.3 435.9 L423.1 435.9 L423.1 428.9 L419.2 428.9 Z" fill="#ff0000"/>
<polyline points="-0.2,780.4 9.8,766.0 19.7,758.6 29.8,756.5 39.8,757.5 49.7,754.6 59.7,751.5 69.6,748.7 79.7,752.9 89.4,763.0 98.5,768.9 108.5,768.6 118.5,765.5 128.6,765.6 138.5,773.7 148.5,775.2 158.5,775.3 168.6,766.6 178.4,754.9 187.0,749.2 197.0,741.6 207.1,732.0 217.2,726.6 227.1,724.7 237.2,722.4 247.2,719.0 257.2,715.4 267.2,711.3 277.2,709.2 286.1,714.6 296.1,722.1 306.0,723.3 316.1,726.0 325.8,736.0 335.8,747.2 346.0,761.0 355.9,774.0 365.9,778.5 374.9,775.4 384.8,779.7 394.8,785.2 404.8,787.4 414.8,783.5 424.9,771.0 434.9,761.1 444.8,755.3 454.7,753.5 464.7,756.5 473.6,761.7 483.6,769.3 493.6,779.6 503.6,790.4 513.6,799.9 523.6,805.3 533.7,808.6 543.7,810.3 553.6,813.4 562.6,816.1 572.5,818.1 582.5,818.6 592.6,813.7 602.6,810.1 612.6,809.1 622.6,807.9 632.4,797.0 642.3,788.3 652.2,779.1 661.1,775.3 671.1,773.1 681.1,775.1 691.1,777.3 701.1,781.9 711.2,780.7 721.2,771.8 731.2,765.1 741.2,762.2 750.0,765.0 759.9,768.5 769.8,774.2 779.9,780.3 790.0,788.1 800.0,795.9 809.9,799.0 819.8,804.6 829.8,807.1 838.8,811.5 848.8,813.7 858.7,814.8 868.8,815.2 878.8,808.6 888.7,801.1 898.7,797.8 908.7,791.3 918.7,783.0 928.5,776.7 937.6,767.9 947.6,758.8 957.5,746.6 967.6,739.9 977.6,742.7 987.5,750.7 997.6,760.4 1007.6,771.9 1017.6,775.1 1026.5,778.8 1036.5,780.9 1046.5,783.5 1056.4,775.6 1066.4,771.2 1076.2,769.2 1086.1,766.4 1096.1,759.7 1106.2,754.1 1116.2,753.5 1125.4,747.9 1135.2,740.4 1145.1,732.8 1155.0,729.8 1165.0,728.2 1175.0,730.5 1184.9,741.2 1194.9,756.2 1205.0,768.9 1213.9,778.1 1223.9,784.7 1233.9,789.3 1243.9,790.1 1253.8,785.8 1263.8,776.6 1273.8,763.2" fill="none" stroke="#e0e000" stroke-width="1.15" stroke-linejoin="round"/>
<polyline points="-0.2,756.5 9.8,737.1 19.7,743.9 29.8,752.3 39.8,759.4 49.7,748.8 59.7,745.4 69.6,743.1 79.7,761.3 89.4,783.2 98.5,780.7 108.5,767.9 118.5,759.2 128.6,766.0 138.5,790.0 148.5,778.1 158.5,775.4 168.6,749.2 178.4,731.6 187.0,737.6 197.0,726.5 207.1,712.7 217.2,715.7 227.1,720.9 237.2,717.9 247.2,712.2 257.2,708.1 267.2,703.1 277.2,704.9 286.1,725.6 296.1,736.9 306.0,725.9 316.1,731.2 325.8,756.1 335.8,769.6 346.0,788.7 355.9,800.0 365.9,787.5 374.9,769.1 384.8,788.2 394.8,796.2 404.8,791.9 414.8,775.6 424.9,745.9 434.9,741.4 444.8,743.6 454.7,750.0 464.7,762.6 473.6,772.1 483.6,784.3 493.6,800.3 503.6,812.0 513.6,818.7 523.6,816.3 533.7,815.1 543.7,813.8 553.6,819.6 562.6,821.3 572.5,822.2 582.5,819.5 592.6,804.0 602.6,802.8 612.6,807.1 622.6,805.5 632.4,775.3 642.3,770.9 652.2,760.6 661.1,767.8 671.1,768.7 681.1,779.1 691.1,781.8 701.1,791.1 711.2,778.3 721.2,754.1 731.2,751.5 741.2,756.5 750.0,770.5 759.9,775.5 769.8,785.8 779.9,792.4 790.0,803.7 800.0,811.5 809.9,805.0 819.8,815.8 829.8,812.0 838.8,820.3 848.8,818.1 858.7,817.1 868.8,816.1 878.8,795.4 888.7,786.0 898.7,791.2 908.7,778.2 918.7,766.3 928.5,764.3 937.6,750.1 947.6,740.6 957.5,722.1 967.6,726.5 977.6,748.4 987.5,766.6 997.6,780.0 1007.6,794.8 1017.6,781.6 1026.5,786.1 1036.5,785.1 1046.5,788.7 1056.4,759.7 1066.4,762.6 1076.2,765.2 1086.1,760.7 1096.1,746.3 1106.2,743.1 1116.2,752.2 1125.4,736.7 1135.2,725.3 1145.1,717.6 1155.0,723.8 1165.0,725.0 1175.0,735.0 1184.9,762.6 1194.9,786.2 1205.0,794.3 1213.9,796.7 1223.9,797.8 1233.9,798.4 1243.9,791.8 1253.8,777.2 1263.8,758.1 1273.8,736.3" fill="none" stroke="#e8e8e8" stroke-width="1.15" stroke-linejoin="round"/>
<polyline points="-0.2,708.8 9.8,679.3 19.7,714.5 29.8,744.0 39.8,763.3 49.7,737.2 59.7,733.1 69.6,731.8 79.7,778.1 89.4,823.5 98.5,804.2 108.5,766.7 118.5,746.8 128.6,766.7 138.5,822.4 148.5,783.8 158.5,775.8 168.6,714.5 178.4,685.0 187.0,714.5 197.0,696.3 207.1,674.1 217.2,694.1 227.1,713.4 237.2,708.8 247.2,698.6 257.2,693.6 267.2,686.8 277.2,696.3 286.1,747.5 296.1,766.7 306.0,730.9 316.1,741.8 325.8,796.3 335.8,814.4 346.0,844.0 355.9,851.9 365.9,805.4 374.9,756.5 384.8,805.4 394.8,818.3 404.8,800.8 414.8,759.9 424.9,695.9 434.9,702.0 444.8,720.2 454.7,742.9 464.7,774.7 473.6,792.9 483.6,814.4 493.6,841.7 503.6,855.3 513.6,856.5 523.6,838.3 533.7,828.1 543.7,820.8 553.6,831.9 562.6,831.9 572.5,830.3 582.5,821.3 592.6,784.5 602.6,788.3 612.6,803.1 622.6,800.8 632.4,731.8 642.3,736.1 652.2,723.6 661.1,752.7 671.1,759.9 681.1,787.2 691.1,790.6 701.1,809.4 711.2,773.6 721.2,718.6 731.2,724.3 741.2,745.2 750.0,781.5 759.9,789.5 769.8,808.8 779.9,816.7 790.0,834.9 800.0,842.8 809.9,817.2 819.8,838.3 829.8,821.9 838.8,838.0 848.8,826.9 858.7,821.7 868.8,817.8 878.8,769.0 888.7,755.8 898.7,778.1 908.7,752.0 918.7,733.1 928.5,739.5 937.6,714.5 947.6,704.3 957.5,673.2 967.6,699.7 977.6,759.9 987.5,798.5 997.6,819.0 1007.6,840.6 1017.6,794.5 1026.5,800.8 1036.5,793.5 1046.5,799.0 1056.4,728.1 1066.4,745.2 1076.2,757.2 1086.1,749.3 1096.1,719.5 1106.2,720.9 1116.2,749.7 1125.4,714.3 1135.2,695.2 1145.1,687.3 1155.0,711.8 1165.0,718.6 1175.0,744.0 1184.9,805.4 1194.9,846.2 1205.0,845.1 1213.9,833.7 1223.9,824.0 1233.9,816.7 1243.9,795.1 1253.8,759.9 1263.8,721.3 1273.8,682.7" fill="none" stroke="#ff00ff" stroke-width="1.15" stroke-linejoin="round"/>
<rect x="0" y="647.6" width="1277" height="1.7" fill="#ac0000"/>
<rect x="0" y="860" width="1277" height="2" fill="#8c0000"/>
<rect x="0" y="880" width="1277" height="2" fill="#8c0000"/>
<rect x="195.0" y="860" width="2" height="21" fill="#8c0000"/>
<rect x="392.6" y="860" width="2" height="21" fill="#8c0000"/>
<rect x="620.3" y="860" width="2" height="21" fill="#8c0000"/>
<rect x="827.6" y="860" width="2" height="21" fill="#8c0000"/>
<rect x="1044.0" y="860" width="2" height="21" fill="#8c0000"/>
<rect x="1202.7" y="860" width="2" height="21" fill="#8c0000"/>
<rect x="245.3" y="861" width="1.4" height="3.2" fill="#8c0000"/>
<rect x="294.3" y="861" width="1.4" height="3.2" fill="#8c0000"/>
<rect x="343.6" y="861" width="1.4" height="3.2" fill="#8c0000"/>
<rect x="1083.8" y="861" width="1.4" height="3.2" fill="#8c0000"/>
<rect x="1123.7" y="861" width="1.4" height="3.2" fill="#8c0000"/>
<rect x="1162.7" y="861" width="1.4" height="3.2" fill="#8c0000"/>
<rect x="32.2" y="881" width="2" height="6" fill="#8c0000"/>
<rect x="71.2" y="881" width="2" height="6" fill="#8c0000"/>
<rect x="123.6" y="881" width="2" height="6" fill="#8c0000"/>
<rect x="160.0" y="881" width="2" height="6" fill="#8c0000"/>
<rect x="201.4" y="881" width="2" height="6" fill="#8c0000"/>
<rect x="238.3" y="881" width="2" height="6" fill="#8c0000"/>
<rect x="282.3" y="881" width="2" height="6" fill="#8c0000"/>
<rect x="331.3" y="881" width="2" height="6" fill="#8c0000"/>
<rect x="363.3" y="881" width="2" height="6" fill="#8c0000"/>
<rect x="394.0" y="881" width="2" height="6" fill="#8c0000"/>
<rect x="431.7" y="881" width="2" height="6" fill="#8c0000"/>
<rect x="468.3" y="881" width="2" height="6" fill="#8c0000"/>
<rect x="508.3" y="881" width="2" height="6" fill="#8c0000"/>
<rect x="543.3" y="881" width="2" height="6" fill="#8c0000"/>
<rect x="582.7" y="881" width="2" height="6" fill="#8c0000"/>
<rect x="615.0" y="881" width="2" height="6" fill="#8c0000"/>
<rect x="649.0" y="881" width="2" height="6" fill="#8c0000"/>
<rect x="690.0" y="881" width="2" height="6" fill="#8c0000"/>
<rect x="726.7" y="881" width="2" height="6" fill="#8c0000"/>
<rect x="765.0" y="881" width="2" height="6" fill="#8c0000"/>
<rect x="808.3" y="881" width="2" height="6" fill="#8c0000"/>
<rect x="845.0" y="881" width="2" height="6" fill="#8c0000"/>
<rect x="899.3" y="881" width="2" height="6" fill="#8c0000"/>
<rect x="938.2" y="881" width="2" height="6" fill="#8c0000"/>
<rect x="988.4" y="881" width="2" height="6" fill="#8c0000"/>
<rect x="1029.0" y="881" width="2" height="6" fill="#8c0000"/>
<rect x="1068.5" y="881" width="2" height="6" fill="#8c0000"/>
<rect x="1269.0" y="881" width="2" height="6" fill="#8c0000"/>
<polyline points="169.10,444.50 180.60,444.50" fill="none" stroke="#dcdc00" stroke-width="1.40" stroke-linecap="butt" stroke-linejoin="miter"/>
<polyline points="180.00,444.50 180.00,447.70 179.00,448.90 168.10,457.20" fill="none" stroke="#dcdc00" stroke-width="1.40" stroke-linecap="butt" stroke-linejoin="miter"/>
<polyline points="170.80,444.90 170.80,448.80 171.60,449.60 181.10,457.20" fill="none" stroke="#dcdc00" stroke-width="1.40" stroke-linecap="butt" stroke-linejoin="miter"/>
<polyline points="174.40,446.40 176.30,448.60" fill="none" stroke="#dcdc00" stroke-width="1.40" stroke-linecap="butt" stroke-linejoin="miter"/>
<polyline points="909.80,529.60 921.30,529.60" fill="none" stroke="#dcdc00" stroke-width="1.40" stroke-linecap="butt" stroke-linejoin="miter"/>
<polyline points="920.70,529.60 920.70,532.80 919.70,534.00 908.80,542.30" fill="none" stroke="#dcdc00" stroke-width="1.40" stroke-linecap="butt" stroke-linejoin="miter"/>
<polyline points="911.50,530.00 911.50,533.90 912.30,534.70 921.80,542.30" fill="none" stroke="#dcdc00" stroke-width="1.40" stroke-linecap="butt" stroke-linejoin="miter"/>
<polyline points="915.10,531.50 917.00,533.70" fill="none" stroke="#dcdc00" stroke-width="1.40" stroke-linecap="butt" stroke-linejoin="miter"/>
<polyline points="37.10,864.00 37.10,866.90 34.40,869.90" fill="none" stroke="#e63232" stroke-width="1.50" stroke-linecap="butt" stroke-linejoin="miter"/>
<polyline points="37.10,866.90 47.90,866.90" fill="none" stroke="#e63232" stroke-width="1.50" stroke-linecap="butt" stroke-linejoin="miter"/>
<polyline points="37.10,870.50 37.10,874.30" fill="none" stroke="#e63232" stroke-width="1.50" stroke-linecap="butt" stroke-linejoin="miter"/>
<polyline points="37.10,870.50 46.70,870.50" fill="none" stroke="#e63232" stroke-width="1.50" stroke-linecap="butt" stroke-linejoin="miter"/>
<polyline points="34.00,874.30 48.00,874.30" fill="none" stroke="#e63232" stroke-width="1.50" stroke-linecap="butt" stroke-linejoin="miter"/>
<polyline points="42.20,866.90 42.20,879.00" fill="none" stroke="#e63232" stroke-width="1.50" stroke-linecap="butt" stroke-linejoin="miter"/>
<polyline points="639.40,570.20 640.00,571.80" fill="none" stroke="#f00000" stroke-width="1.25" stroke-linecap="butt" stroke-linejoin="miter"/>
<polyline points="632.80,573.10 645.20,573.10" fill="none" stroke="#f00000" stroke-width="1.25" stroke-linecap="butt" stroke-linejoin="miter"/>
<polyline points="633.80,573.10 633.80,581.70 632.20,584.80" fill="none" stroke="#f00000" stroke-width="1.25" stroke-linecap="butt" stroke-linejoin="miter"/>
<polyline points="636.80,575.80 644.00,574.80" fill="none" stroke="#f00000" stroke-width="1.25" stroke-linecap="butt" stroke-linejoin="miter"/>
<polyline points="636.20,575.80 636.20,583.80 637.60,582.80" fill="none" stroke="#f00000" stroke-width="1.25" stroke-linecap="butt" stroke-linejoin="miter"/>
<polyline points="636.20,579.10 645.00,579.10" fill="none" stroke="#f00000" stroke-width="1.25" stroke-linecap="butt" stroke-linejoin="miter"/>
<polyline points="640.00,575.40 641.00,579.70 644.50,584.50" fill="none" stroke="#f00000" stroke-width="1.25" stroke-linecap="butt" stroke-linejoin="miter"/>
<polyline points="637.80,581.40 640.80,584.40" fill="none" stroke="#f00000" stroke-width="1.25" stroke-linecap="butt" stroke-linejoin="miter"/>
<polyline points="644.20,581.40 645.00,584.00" fill="none" stroke="#f00000" stroke-width="1.25" stroke-linecap="butt" stroke-linejoin="miter"/>
<polyline points="650.20,570.60 650.20,575.60" fill="none" stroke="#f00000" stroke-width="1.25" stroke-linecap="butt" stroke-linejoin="miter"/>
<polyline points="647.20,572.60 650.20,572.60" fill="none" stroke="#f00000" stroke-width="1.25" stroke-linecap="butt" stroke-linejoin="miter"/>
<polyline points="647.00,575.80 650.40,574.80" fill="none" stroke="#f00000" stroke-width="1.25" stroke-linecap="butt" stroke-linejoin="miter"/>
<polyline points="654.20,570.60 654.20,574.40 655.00,575.20 659.20,575.20 659.40,573.80" fill="none" stroke="#f00000" stroke-width="1.25" stroke-linecap="butt" stroke-linejoin="miter"/>
<polyline points="658.40,571.00 654.40,573.00" fill="none" stroke="#f00000" stroke-width="1.25" stroke-linecap="butt" stroke-linejoin="miter"/>
<polyline points="649.20,577.60 657.40,577.60 657.40,584.40 655.80,584.80" fill="none" stroke="#f00000" stroke-width="1.25" stroke-linecap="butt" stroke-linejoin="miter"/>
<polyline points="649.20,577.60 649.20,585.00" fill="none" stroke="#f00000" stroke-width="1.25" stroke-linecap="butt" stroke-linejoin="miter"/>
<polyline points="649.20,580.00 657.40,580.00" fill="none" stroke="#f00000" stroke-width="1.25" stroke-linecap="butt" stroke-linejoin="miter"/>
<polyline points="649.20,582.30 657.40,582.30" fill="none" stroke="#f00000" stroke-width="1.25" stroke-linecap="butt" stroke-linejoin="miter"/>
<polyline points="817.00,575.20 817.60,576.80" fill="none" stroke="#f00000" stroke-width="1.25" stroke-linecap="butt" stroke-linejoin="miter"/>
<polyline points="810.40,578.10 822.80,578.10" fill="none" stroke="#f00000" stroke-width="1.25" stroke-linecap="butt" stroke-linejoin="miter"/>
<polyline points="811.40,578.10 811.40,586.70 809.80,589.80" fill="none" stroke="#f00000" stroke-width="1.25" stroke-linecap="butt" stroke-linejoin="miter"/>
<polyline points="814.40,580.80 821.60,579.80" fill="none" stroke="#f00000" stroke-width="1.25" stroke-linecap="butt" stroke-linejoin="miter"/>
<polyline points="813.80,580.80 813.80,588.80 815.20,587.80" fill="none" stroke="#f00000" stroke-width="1.25" stroke-linecap="butt" stroke-linejoin="miter"/>
<polyline points="813.80,584.10 822.60,584.10" fill="none" stroke="#f00000" stroke-width="1.25" stroke-linecap="butt" stroke-linejoin="miter"/>
<polyline points="817.60,580.40 818.60,584.70 822.10,589.50" fill="none" stroke="#f00000" stroke-width="1.25" stroke-linecap="butt" stroke-linejoin="miter"/>
<polyline points="815.40,586.40 818.40,589.40" fill="none" stroke="#f00000" stroke-width="1.25" stroke-linecap="butt" stroke-linejoin="miter"/>
<polyline points="821.80,586.40 822.60,589.00" fill="none" stroke="#f00000" stroke-width="1.25" stroke-linecap="butt" stroke-linejoin="miter"/>
<polyline points="827.80,575.60 827.80,580.60" fill="none" stroke="#f00000" stroke-width="1.25" stroke-linecap="butt" stroke-linejoin="miter"/>
<polyline points="824.80,577.60 827.80,577.60" fill="none" stroke="#f00000" stroke-width="1.25" stroke-linecap="butt" stroke-linejoin="miter"/>
<polyline points="824.60,580.80 828.00,579.80" fill="none" stroke="#f00000" stroke-width="1.25" stroke-linecap="butt" stroke-linejoin="miter"/>
<polyline points="831.80,575.60 831.80,579.40 832.60,580.20 836.80,580.20 837.00,578.80" fill="none" stroke="#f00000" stroke-width="1.25" stroke-linecap="butt" stroke-linejoin="miter"/>
<polyline points="836.00,576.00 832.00,578.00" fill="none" stroke="#f00000" stroke-width="1.25" stroke-linecap="butt" stroke-linejoin="miter"/>
<polyline points="826.80,582.60 835.00,582.60 835.00,589.40 833.40,589.80" fill="none" stroke="#f00000" stroke-width="1.25" stroke-linecap="butt" stroke-linejoin="miter"/>
<polyline points="826.80,582.60 826.80,590.00" fill="none" stroke="#f00000" stroke-width="1.25" stroke-linecap="butt" stroke-linejoin="miter"/>
<polyline points="826.80,585.00 835.00,585.00" fill="none" stroke="#f00000" stroke-width="1.25" stroke-linecap="butt" stroke-linejoin="miter"/>
<polyline points="826.80,587.30 835.00,587.30" fill="none" stroke="#f00000" stroke-width="1.25" stroke-linecap="butt" stroke-linejoin="miter"/>
<polyline points="886.20,607.60 886.80,609.20" fill="none" stroke="#f00000" stroke-width="1.25" stroke-linecap="butt" stroke-linejoin="miter"/>
<polyline points="879.60,610.50 892.00,610.50" fill="none" stroke="#f00000" stroke-width="1.25" stroke-linecap="butt" stroke-linejoin="miter"/>
<polyline points="880.60,610.50 880.60,619.10 879.00,622.20" fill="none" stroke="#f00000" stroke-width="1.25" stroke-linecap="butt" stroke-linejoin="miter"/>
<polyline points="883.60,613.20 890.80,612.20" fill="none" stroke="#f00000" stroke-width="1.25" stroke-linecap="butt" stroke-linejoin="miter"/>
<polyline points="883.00,613.20 883.00,621.20 884.40,620.20" fill="none" stroke="#f00000" stroke-width="1.25" stroke-linecap="butt" stroke-linejoin="miter"/>
<polyline points="883.00,616.50 891.80,616.50" fill="none" stroke="#f00000" stroke-width="1.25" stroke-linecap="butt" stroke-linejoin="miter"/>
<polyline points="886.80,612.80 887.80,617.10 891.30,621.90" fill="none" stroke="#f00000" stroke-width="1.25" stroke-linecap="butt" stroke-linejoin="miter"/>
<polyline points="884.60,618.80 887.60,621.80" fill="none" stroke="#f00000" stroke-width="1.25" stroke-linecap="butt" stroke-linejoin="miter"/>
<polyline points="891.00,618.80 891.80,621.40" fill="none" stroke="#f00000" stroke-width="1.25" stroke-linecap="butt" stroke-linejoin="miter"/>
<polyline points="897.00,608.00 897.00,613.00" fill="none" stroke="#f00000" stroke-width="1.25" stroke-linecap="butt" stroke-linejoin="miter"/>
<polyline points="894.00,610.00 897.00,610.00" fill="none" stroke="#f00000" stroke-width="1.25" stroke-linecap="butt" stroke-linejoin="miter"/>
<polyline points="893.80,613.20 897.20,612.20" fill="none" stroke="#f00000" stroke-width="1.25" stroke-linecap="butt" stroke-linejoin="miter"/>
<polyline points="901.00,608.00 901.00,611.80 901.80,612.60 906.00,612.60 906.20,611.20" fill="none" stroke="#f00000" stroke-width="1.25" stroke-linecap="butt" stroke-linejoin="miter"/>
<polyline points="905.20,608.40 901.20,610.40" fill="none" stroke="#f00000" stroke-width="1.25" stroke-linecap="butt" stroke-linejoin="miter"/>
<polyline points="896.00,615.00 904.20,615.00 904.20,621.80 902.60,622.20" fill="none" stroke="#f00000" stroke-width="1.25" stroke-linecap="butt" stroke-linejoin="miter"/>
<polyline points="896.00,615.00 896.00,622.40" fill="none" stroke="#f00000" stroke-width="1.25" stroke-linecap="butt" stroke-linejoin="miter"/>
<polyline points="896.00,617.40 904.20,617.40" fill="none" stroke="#f00000" stroke-width="1.25" stroke-linecap="butt" stroke-linejoin="miter"/>
<polyline points="896.00,619.70 904.20,619.70" fill="none" stroke="#f00000" stroke-width="1.25" stroke-linecap="butt" stroke-linejoin="miter"/>
<polygon points="382.40,632.30 385.90,635.80 385.90,636.90 378.90,636.90 378.90,635.80" fill="#f00000"/>
<text x="378.2" y="647.2" font-family="Liberation Serif" font-weight="bold" font-size="13.5" fill="#f00000" textLength="9" lengthAdjust="spacingAndGlyphs">S</text>
<polygon points="1195.70,630.00 1209.30,630.00 1211.90,632.60 1211.90,646.80 1195.70,646.80" fill="#004080"/>
<polyline points="1197.23,644.32 1197.23,633.55 1202.51,633.55 1202.51,641.58" fill="none" stroke="#f0f0f0" stroke-width="1.20" stroke-linecap="butt" stroke-linejoin="miter"/>
<polyline points="1199.89,635.31 1199.89,641.58 1197.23,644.91" fill="none" stroke="#b8c8d8" stroke-width="1.60" stroke-linecap="butt" stroke-linejoin="miter"/>
<polyline points="1200.16,641.58 1202.71,644.91" fill="none" stroke="#f0f0f0" stroke-width="1.20" stroke-linecap="butt" stroke-linejoin="miter"/>
<polyline points="1204.67,634.61 1210.93,634.61" fill="none" stroke="#f0f0f0" stroke-width="1.20" stroke-linecap="butt" stroke-linejoin="miter"/>
<polyline points="1208.78,631.20 1208.78,644.32 1207.21,644.63" fill="none" stroke="#f0f0f0" stroke-width="1.30" stroke-linecap="butt" stroke-linejoin="miter"/>
<polyline points="1208.39,637.47 1203.30,642.36" fill="none" stroke="#f0f0f0" stroke-width="1.20" stroke-linecap="butt" stroke-linejoin="miter"/>
<circle cx="6" cy="658.4" r="7" fill="#7e7e7e"/>
<polyline points="2.20,656.80 6.00,660.60 9.80,656.80" fill="none" stroke="#262626" stroke-width="1.50" stroke-linecap="butt" stroke-linejoin="miter"/>
<polyline points="448.60,83.40 434.60,77.80" fill="none" stroke="#a8a8a8" stroke-width="1.10" stroke-linecap="butt" stroke-linejoin="miter"/>
<polyline points="434.40,81.60 434.60,77.80 438.20,77.20" fill="none" stroke="#a8a8a8" stroke-width="1.10" stroke-linecap="butt" stroke-linejoin="miter"/>
<polyline points="872.80,535.60 858.80,536.00" fill="none" stroke="#a8a8a8" stroke-width="1.10" stroke-linecap="butt" stroke-linejoin="miter"/>
<polyline points="862.00,532.80 858.60,536.00 862.20,539.40" fill="none" stroke="#a8a8a8" stroke-width="1.10" stroke-linecap="butt" stroke-linejoin="miter"/>
<rect x="1061.03" y="823.92" width="16.35" height="23.46" fill="#ffffff" rx="0.00"/>
<rect x="1066.34" y="827.48" width="1.80" height="17.30" fill="#000" rx="0.00"/>
<rect x="1071.79" y="827.48" width="0.95" height="17.30" fill="#000" rx="0.00"/>
<polygon points="1064.82,846.44 1069.56,848.33 1065.77,856.96 1061.03,855.68" fill="#ffffff"/>
<polygon points="1068.37,846.91 1072.64,845.96 1076.91,853.07 1079.27,855.91 1072.64,855.91" fill="#ffffff"/>
<polygon points="1075.96,855.91 1080.70,855.91 1084.96,835.30 1086.62,834.68 1083.30,831.18 1079.27,834.68 1081.41,835.44 1077.38,851.18" fill="#ffffff"/>
<rect x="1077.85" y="825.11" width="17.06" height="2.84" fill="#ffffff" rx="0.00"/>
<rect x="1087.33" y="821.08" width="5.69" height="34.83" fill="#ffffff" rx="0.00"/>
<rect x="1084.73" y="854.11" width="5.45" height="1.80" fill="#ffffff" rx="0.00"/>
<rect x="1111.82" y="821.08" width="6.16" height="3.08" fill="#ffffff" rx="0.00"/>
<rect x="1099.03" y="823.92" width="32.94" height="3.32" fill="#ffffff" rx="0.00"/>
<rect x="1099.03" y="823.92" width="5.69" height="6.87" fill="#ffffff" rx="0.00"/>
<rect x="1126.28" y="823.92" width="5.69" height="6.87" fill="#ffffff" rx="0.00"/>
<rect x="1105.66" y="829.14" width="20.14" height="1.66" fill="#ffffff" rx="0.00"/>
<rect x="1103.29" y="832.22" width="24.64" height="8.53" fill="#ffffff" rx="2.00"/>
<rect x="1106.14" y="835.30" width="18.72" height="2.61" fill="#000" rx="1.00"/>
<rect x="1100.69" y="842.64" width="30.09" height="13.51" fill="#ffffff" rx="5.20"/>
<polygon points="1115.38,845.49 1119.64,849.75 1115.38,854.02 1111.11,849.75" fill="#000"/>
<polygon points="1136.08,822.74 1141.06,822.27 1144.14,829.14 1139.16,830.09" fill="#ffffff"/>
<polygon points="1137.74,833.17 1142.24,831.98 1144.61,839.80 1140.11,841.93" fill="#ffffff"/>
<polygon points="1139.64,845.01 1144.85,843.83 1141.77,856.15 1137.03,854.97" fill="#ffffff"/>
<polygon points="1146.98,826.29 1152.19,826.29 1152.19,853.31 1169.26,853.31 1169.26,856.15 1149.35,856.15 1146.98,853.55" fill="#ffffff"/>
<polygon points="1144.85,832.22 1168.07,823.69 1168.07,827.24 1152.19,832.22 1146.74,834.35" fill="#ffffff"/>
<rect x="1155.04" y="824.64" width="4.98" height="26.07" fill="#ffffff" rx="0.00"/>
<polygon points="1154.09,824.40 1157.64,820.94 1161.29,824.40" fill="#ffffff"/>
<polygon points="1162.86,825.82 1168.07,823.69 1168.07,845.73 1166.89,846.91 1160.96,846.91 1161.44,844.07 1162.86,843.83" fill="#ffffff"/>
<polyline points="1180.00,845.30 1180.00,855.30 1178.80,855.50" fill="none" stroke="#f4f4f4" stroke-width="1.50" stroke-linecap="butt" stroke-linejoin="miter"/>
<polyline points="1177.80,847.90 1182.20,847.90" fill="none" stroke="#f4f4f4" stroke-width="1.50" stroke-linecap="butt" stroke-linejoin="miter"/>
<polyline points="1177.80,851.90 1182.20,850.30" fill="none" stroke="#f4f4f4" stroke-width="1.50" stroke-linecap="butt" stroke-linejoin="miter"/>
<polyline points="1183.40,845.50 1183.40,848.90 1188.00,848.90" fill="none" stroke="#f4f4f4" stroke-width="1.50" stroke-linecap="butt" stroke-linejoin="miter"/>
<polyline points="1187.80,846.10 1183.60,847.30" fill="none" stroke="#f4f4f4" stroke-width="1.50" stroke-linecap="butt" stroke-linejoin="miter"/>
<polyline points="1183.60,850.70 1187.60,850.70 1187.60,855.70 1183.60,855.70 1183.60,850.70" fill="none" stroke="#f4f4f4" stroke-width="1.50" stroke-linecap="butt" stroke-linejoin="miter"/>
<polyline points="1183.60,853.20 1187.60,853.20" fill="none" stroke="#f4f4f4" stroke-width="1.50" stroke-linecap="butt" stroke-linejoin="miter"/>
<polyline points="1191.05,845.30 1191.05,855.80" fill="none" stroke="#f4f4f4" stroke-width="1.50" stroke-linecap="butt" stroke-linejoin="miter"/>
<polyline points="1188.85,848.10 1193.45,848.10" fill="none" stroke="#f4f4f4" stroke-width="1.50" stroke-linecap="butt" stroke-linejoin="miter"/>
<polyline points="1191.05,848.70 1189.05,852.70" fill="none" stroke="#f4f4f4" stroke-width="1.50" stroke-linecap="butt" stroke-linejoin="miter"/>
<polyline points="1191.25,849.30 1193.05,851.30" fill="none" stroke="#f4f4f4" stroke-width="1.50" stroke-linecap="butt" stroke-linejoin="miter"/>
<polyline points="1194.45,846.50 1198.85,846.50" fill="none" stroke="#f4f4f4" stroke-width="1.50" stroke-linecap="butt" stroke-linejoin="miter"/>
<polyline points="1193.85,849.50 1199.45,849.50" fill="none" stroke="#f4f4f4" stroke-width="1.50" stroke-linecap="butt" stroke-linejoin="miter"/>
<polyline points="1196.65,849.50 1196.65,855.50 1195.65,855.50" fill="none" stroke="#f4f4f4" stroke-width="1.50" stroke-linecap="butt" stroke-linejoin="miter"/>
<polyline points="1194.85,851.30 1194.05,854.30" fill="none" stroke="#f4f4f4" stroke-width="1.50" stroke-linecap="butt" stroke-linejoin="miter"/>
<polyline points="1198.45,851.30 1199.25,854.30" fill="none" stroke="#f4f4f4" stroke-width="1.50" stroke-linecap="butt" stroke-linejoin="miter"/>
<polyline points="1205.10,845.30 1205.50,846.90" fill="none" stroke="#f4f4f4" stroke-width="1.50" stroke-linecap="butt" stroke-linejoin="miter"/>
<polyline points="1200.30,847.50 1210.30,847.50" fill="none" stroke="#f4f4f4" stroke-width="1.50" stroke-linecap="butt" stroke-linejoin="miter"/>
<polyline points="1203.30,848.50 1201.30,850.90" fill="none" stroke="#f4f4f4" stroke-width="1.50" stroke-linecap="butt" stroke-linejoin="miter"/>
<polyline points="1207.30,848.50 1209.30,850.90" fill="none" stroke="#f4f4f4" stroke-width="1.50" stroke-linecap="butt" stroke-linejoin="miter"/>
<polyline points="1207.50,850.90 1205.30,853.70 1200.50,855.90" fill="none" stroke="#f4f4f4" stroke-width="1.50" stroke-linecap="butt" stroke-linejoin="miter"/>
<polyline points="1202.90,851.10 1205.50,853.90 1210.30,855.90" fill="none" stroke="#f4f4f4" stroke-width="1.50" stroke-linecap="butt" stroke-linejoin="miter"/>
<polyline points="1213.35,845.70 1219.75,845.70 1219.75,849.90 1213.35,849.90 1213.35,845.70" fill="none" stroke="#f4f4f4" stroke-width="1.50" stroke-linecap="butt" stroke-linejoin="miter"/>
<polyline points="1213.35,847.80 1219.75,847.80" fill="none" stroke="#f4f4f4" stroke-width="1.50" stroke-linecap="butt" stroke-linejoin="miter"/>
<polyline points="1213.95,850.10 1211.55,852.90" fill="none" stroke="#f4f4f4" stroke-width="1.50" stroke-linecap="butt" stroke-linejoin="miter"/>
<polyline points="1213.15,851.50 1220.75,851.50 1220.35,855.30 1218.95,855.70" fill="none" stroke="#f4f4f4" stroke-width="1.50" stroke-linecap="butt" stroke-linejoin="miter"/>
<polyline points="1215.95,851.70 1213.15,855.70" fill="none" stroke="#f4f4f4" stroke-width="1.50" stroke-linecap="butt" stroke-linejoin="miter"/>
<polyline points="1218.55,851.70 1215.75,855.70" fill="none" stroke="#f4f4f4" stroke-width="1.50" stroke-linecap="butt" stroke-linejoin="miter"/>
<polyline points="1223.00,846.20 1232.00,846.20" fill="none" stroke="#f4f4f4" stroke-width="1.50" stroke-linecap="butt" stroke-linejoin="miter"/>
<polyline points="1224.40,847.70 1225.40,849.90" fill="none" stroke="#f4f4f4" stroke-width="1.50" stroke-linecap="butt" stroke-linejoin="miter"/>
<polyline points="1230.60,847.70 1229.60,849.90" fill="none" stroke="#f4f4f4" stroke-width="1.50" stroke-linecap="butt" stroke-linejoin="miter"/>
<polyline points="1222.20,851.30 1232.80,851.30" fill="none" stroke="#f4f4f4" stroke-width="1.50" stroke-linecap="butt" stroke-linejoin="miter"/>
<polyline points="1227.50,846.20 1227.50,855.90" fill="none" stroke="#f4f4f4" stroke-width="1.50" stroke-linecap="butt" stroke-linejoin="miter"/>
<polyline points="1238.25,845.30 1235.05,849.10 1242.45,848.70" fill="none" stroke="#f4f4f4" stroke-width="1.50" stroke-linecap="butt" stroke-linejoin="miter"/>
<polyline points="1240.45,846.70 1242.85,849.70" fill="none" stroke="#f4f4f4" stroke-width="1.50" stroke-linecap="butt" stroke-linejoin="miter"/>
<polyline points="1235.05,851.10 1242.05,851.10 1242.05,855.70 1235.05,855.70 1235.05,851.10" fill="none" stroke="#f4f4f4" stroke-width="1.50" stroke-linecap="butt" stroke-linejoin="miter"/>
<rect x="4.50" y="884.70" width="1.20" height="1.30" fill="#8c8c8c" rx="0.00"/>
<rect x="9.90" y="884.70" width="1.20" height="1.30" fill="#8c8c8c" rx="0.00"/>
<rect x="13.50" y="884.70" width="3.00" height="1.30" fill="#8c8c8c" rx="0.00"/>
<rect x="20.70" y="884.70" width="4.50" height="1.30" fill="#8c8c8c" rx="0.00"/>
<rect x="37.70" y="884.70" width="1.20" height="1.30" fill="#8c8c8c" rx="0.00"/>
<rect x="41.30" y="884.70" width="1.20" height="1.30" fill="#8c8c8c" rx="0.00"/>
<rect x="44.90" y="884.70" width="4.50" height="1.30" fill="#8c8c8c" rx="0.00"/>
<rect x="52.60" y="884.70" width="1.20" height="1.30" fill="#8c8c8c" rx="0.00"/>
<rect x="56.20" y="884.70" width="1.20" height="1.30" fill="#8c8c8c" rx="0.00"/>
<rect x="61.60" y="884.70" width="4.50" height="1.30" fill="#8c8c8c" rx="0.00"/>
<rect x="76.70" y="884.70" width="1.20" height="1.30" fill="#8c8c8c" rx="0.00"/>
<rect x="81.10" y="884.70" width="4.50" height="1.30" fill="#8c8c8c" rx="0.00"/>
<rect x="89.80" y="884.70" width="1.20" height="1.30" fill="#8c8c8c" rx="0.00"/>
<rect x="93.40" y="884.70" width="1.20" height="1.30" fill="#8c8c8c" rx="0.00"/>
<rect x="97.00" y="884.70" width="1.20" height="1.30" fill="#8c8c8c" rx="0.00"/>
<rect x="101.40" y="884.70" width="1.20" height="1.30" fill="#8c8c8c" rx="0.00"/>
<rect x="105.00" y="884.70" width="1.20" height="1.30" fill="#8c8c8c" rx="0.00"/>
<rect x="108.60" y="884.70" width="1.20" height="1.30" fill="#8c8c8c" rx="0.00"/>
<rect x="114.00" y="884.70" width="1.20" height="1.30" fill="#8c8c8c" rx="0.00"/>
<rect x="118.40" y="884.70" width="1.20" height="1.30" fill="#8c8c8c" rx="0.00"/>
<rect x="129.10" y="884.70" width="4.50" height="1.30" fill="#8c8c8c" rx="0.00"/>
<rect x="137.80" y="884.70" width="1.20" height="1.30" fill="#8c8c8c" rx="0.00"/>
<rect x="142.20" y="884.70" width="1.20" height="1.30" fill="#8c8c8c" rx="0.00"/>
<rect x="146.60" y="884.70" width="4.50" height="1.30" fill="#8c8c8c" rx="0.00"/>
<rect x="155.30" y="884.70" width="1.20" height="1.30" fill="#8c8c8c" rx="0.00"/>
<rect x="165.50" y="884.70" width="1.20" height="1.30" fill="#8c8c8c" rx="0.00"/>
<rect x="169.90" y="884.70" width="1.20" height="1.30" fill="#8c8c8c" rx="0.00"/>
<rect x="173.50" y="884.70" width="1.20" height="1.30" fill="#8c8c8c" rx="0.00"/>
<rect x="177.90" y="884.70" width="1.20" height="1.30" fill="#8c8c8c" rx="0.00"/>
<rect x="182.30" y="884.70" width="1.20" height="1.30" fill="#8c8c8c" rx="0.00"/>
<rect x="186.70" y="884.70" width="1.20" height="1.30" fill="#8c8c8c" rx="0.00"/>
<rect x="191.10" y="884.70" width="4.50" height="1.30" fill="#8c8c8c" rx="0.00"/>
<rect x="206.90" y="884.70" width="4.50" height="1.30" fill="#8c8c8c" rx="0.00"/>
<rect x="215.60" y="884.70" width="3.00" height="1.30" fill="#8c8c8c" rx="0.00"/>
<rect x="222.80" y="884.70" width="1.20" height="1.30" fill="#8c8c8c" rx="0.00"/>
<rect x="227.20" y="884.70" width="1.20" height="1.30" fill="#8c8c8c" rx="0.00"/>
<rect x="230.80" y="884.70" width="3.00" height="1.30" fill="#8c8c8c" rx="0.00"/>
<rect x="243.80" y="884.70" width="1.20" height="1.30" fill="#8c8c8c" rx="0.00"/>
<rect x="248.20" y="884.70" width="1.20" height="1.30" fill="#8c8c8c" rx="0.00"/>
<rect x="253.60" y="884.70" width="1.20" height="1.30" fill="#8c8c8c" rx="0.00"/>
<rect x="257.20" y="884.70" width="1.20" height="1.30" fill="#8c8c8c" rx="0.00"/>
<rect x="261.60" y="884.70" width="1.20" height="1.30" fill="#8c8c8c" rx="0.00"/>
<rect x="267.00" y="884.70" width="1.20" height="1.30" fill="#8c8c8c" rx="0.00"/>
<rect x="270.60" y="884.70" width="1.20" height="1.30" fill="#8c8c8c" rx="0.00"/>
<rect x="276.00" y="884.70" width="1.20" height="1.30" fill="#8c8c8c" rx="0.00"/>
<rect x="287.80" y="884.70" width="1.20" height="1.30" fill="#8c8c8c" rx="0.00"/>
<rect x="292.20" y="884.70" width="3.00" height="1.30" fill="#8c8c8c" rx="0.00"/>
<rect x="297.60" y="884.70" width="1.20" height="1.30" fill="#8c8c8c" rx="0.00"/>
<rect x="302.00" y="884.70" width="1.20" height="1.30" fill="#8c8c8c" rx="0.00"/>
<rect x="306.40" y="884.70" width="1.20" height="1.30" fill="#8c8c8c" rx="0.00"/>
<rect x="310.80" y="884.70" width="1.20" height="1.30" fill="#8c8c8c" rx="0.00"/>
<rect x="315.20" y="884.70" width="1.20" height="1.30" fill="#8c8c8c" rx="0.00"/>
<rect x="318.80" y="884.70" width="3.00" height="1.30" fill="#8c8c8c" rx="0.00"/>
<rect x="325.00" y="884.70" width="4.50" height="1.30" fill="#8c8c8c" rx="0.00"/>
<rect x="336.80" y="884.70" width="1.20" height="1.30" fill="#8c8c8c" rx="0.00"/>
<rect x="342.20" y="884.70" width="1.20" height="1.30" fill="#8c8c8c" rx="0.00"/>
<rect x="345.80" y="884.70" width="4.50" height="1.30" fill="#8c8c8c" rx="0.00"/>
<rect x="354.50" y="884.70" width="1.20" height="1.30" fill="#8c8c8c" rx="0.00"/>
<rect x="358.90" y="884.70" width="1.20" height="1.30" fill="#8c8c8c" rx="0.00"/>
<rect x="368.80" y="884.70" width="1.20" height="1.30" fill="#8c8c8c" rx="0.00"/>
<rect x="372.40" y="884.70" width="1.20" height="1.30" fill="#8c8c8c" rx="0.00"/>
<rect x="376.80" y="884.70" width="1.20" height="1.30" fill="#8c8c8c" rx="0.00"/>
<rect x="380.40" y="884.70" width="1.20" height="1.30" fill="#8c8c8c" rx="0.00"/>
<rect x="385.80" y="884.70" width="1.20" height="1.30" fill="#8c8c8c" rx="0.00"/>
<rect x="389.40" y="884.70" width="1.20" height="1.30" fill="#8c8c8c" rx="0.00"/>
<rect x="399.50" y="884.70" width="3.00" height="1.30" fill="#8c8c8c" rx="0.00"/>
<rect x="406.70" y="884.70" width="3.00" height="1.30" fill="#8c8c8c" rx="0.00"/>
<rect x="412.10" y="884.70" width="1.20" height="1.30" fill="#8c8c8c" rx="0.00"/>
<rect x="415.70" y="884.70" width="3.00" height="1.30" fill="#8c8c8c" rx="0.00"/>
<rect x="421.90" y="884.70" width="3.00" height="1.30" fill="#8c8c8c" rx="0.00"/>
<rect x="427.30" y="884.70" width="4.50" height="1.30" fill="#8c8c8c" rx="0.00"/>
<rect x="437.20" y="884.70" width="4.50" height="1.30" fill="#8c8c8c" rx="0.00"/>
<rect x="445.90" y="884.70" width="4.50" height="1.30" fill="#8c8c8c" rx="0.00"/>
<rect x="454.60" y="884.70" width="1.20" height="1.30" fill="#8c8c8c" rx="0.00"/>
<rect x="460.00" y="884.70" width="1.20" height="1.30" fill="#8c8c8c" rx="0.00"/>
<rect x="463.60" y="884.70" width="1.20" height="1.30" fill="#8c8c8c" rx="0.00"/>
<rect x="473.80" y="884.70" width="3.00" height="1.30" fill="#8c8c8c" rx="0.00"/>
<rect x="480.00" y="884.70" width="1.20" height="1.30" fill="#8c8c8c" rx="0.00"/>
<rect x="485.40" y="884.70" width="1.20" height="1.30" fill="#8c8c8c" rx="0.00"/>
<rect x="489.00" y="884.70" width="3.00" height="1.30" fill="#8c8c8c" rx="0.00"/>
<rect x="495.20" y="884.70" width="3.00" height="1.30" fill="#8c8c8c" rx="0.00"/>
<rect x="502.40" y="884.70" width="3.00" height="1.30" fill="#8c8c8c" rx="0.00"/>
<rect x="513.80" y="884.70" width="3.00" height="1.30" fill="#8c8c8c" rx="0.00"/>
<rect x="519.20" y="884.70" width="4.50" height="1.30" fill="#8c8c8c" rx="0.00"/>
<rect x="527.90" y="884.70" width="3.00" height="1.30" fill="#8c8c8c" rx="0.00"/>
<rect x="533.30" y="884.70" width="4.50" height="1.30" fill="#8c8c8c" rx="0.00"/>
<rect x="548.80" y="884.70" width="1.20" height="1.30" fill="#8c8c8c" rx="0.00"/>
<rect x="554.20" y="884.70" width="1.20" height="1.30" fill="#8c8c8c" rx="0.00"/>
<rect x="557.80" y="884.70" width="1.20" height="1.30" fill="#8c8c8c" rx="0.00"/>
<rect x="563.20" y="884.70" width="3.00" height="1.30" fill="#8c8c8c" rx="0.00"/>
<rect x="569.40" y="884.70" width="3.00" height="1.30" fill="#8c8c8c" rx="0.00"/>
<rect x="576.60" y="884.70" width="3.00" height="1.30" fill="#8c8c8c" rx="0.00"/>
<rect x="588.20" y="884.70" width="1.20" height="1.30" fill="#8c8c8c" rx="0.00"/>
<rect x="592.60" y="884.70" width="1.20" height="1.30" fill="#8c8c8c" rx="0.00"/>
<rect x="597.00" y="884.70" width="1.20" height="1.30" fill="#8c8c8c" rx="0.00"/>
<rect x="602.40" y="884.70" width="1.20" height="1.30" fill="#8c8c8c" rx="0.00"/>
<rect x="607.80" y="884.70" width="1.20" height="1.30" fill="#8c8c8c" rx="0.00"/>
<rect x="620.50" y="884.70" width="3.00" height="1.30" fill="#8c8c8c" rx="0.00"/>
<rect x="627.70" y="884.70" width="4.50" height="1.30" fill="#8c8c8c" rx="0.00"/>
<rect x="635.40" y="884.70" width="1.20" height="1.30" fill="#8c8c8c" rx="0.00"/>
<rect x="640.80" y="884.70" width="3.00" height="1.30" fill="#8c8c8c" rx="0.00"/>
<rect x="654.50" y="884.70" width="3.00" height="1.30" fill="#8c8c8c" rx="0.00"/>
<rect x="659.90" y="884.70" width="3.00" height="1.30" fill="#8c8c8c" rx="0.00"/>
<rect x="666.10" y="884.70" width="1.20" height="1.30" fill="#8c8c8c" rx="0.00"/>
<rect x="670.50" y="884.70" width="3.00" height="1.30" fill="#8c8c8c" rx="0.00"/>
<rect x="676.70" y="884.70" width="1.20" height="1.30" fill="#8c8c8c" rx="0.00"/>
<rect x="680.30" y="884.70" width="1.20" height="1.30" fill="#8c8c8c" rx="0.00"/>
<rect x="685.70" y="884.70" width="1.20" height="1.30" fill="#8c8c8c" rx="0.00"/>
<rect x="695.50" y="884.70" width="3.00" height="1.30" fill="#208898" rx="0.00"/>
<rect x="702.70" y="884.70" width="1.20" height="1.30" fill="#208898" rx="0.00"/>
<rect x="708.10" y="884.70" width="3.00" height="1.30" fill="#208898" rx="0.00"/>
<rect x="713.50" y="884.70" width="3.00" height="1.30" fill="#208898" rx="0.00"/>
<rect x="718.90" y="884.70" width="1.20" height="1.30" fill="#208898" rx="0.00"/>
<rect x="732.20" y="884.70" width="1.20" height="1.30" fill="#208898" rx="0.00"/>
<rect x="737.60" y="884.70" width="1.20" height="1.30" fill="#208898" rx="0.00"/>
<rect x="741.20" y="884.70" width="1.20" height="1.30" fill="#208898" rx="0.00"/>
<rect x="745.60" y="884.70" width="3.00" height="1.30" fill="#208898" rx="0.00"/>
<rect x="752.80" y="884.70" width="1.20" height="1.30" fill="#208898" rx="0.00"/>
<rect x="757.20" y="884.70" width="1.20" height="1.30" fill="#208898" rx="0.00"/>
<rect x="760.80" y="884.70" width="3.00" height="1.30" fill="#208898" rx="0.00"/>
<rect x="770.50" y="884.70" width="1.20" height="1.30" fill="#8c8c8c" rx="0.00"/>
<rect x="774.10" y="884.70" width="1.20" height="1.30" fill="#8c8c8c" rx="0.00"/>
<rect x="778.50" y="884.70" width="3.00" height="1.30" fill="#8c8c8c" rx="0.00"/>
<rect x="783.90" y="884.70" width="1.20" height="1.30" fill="#8c8c8c" rx="0.00"/>
<rect x="787.50" y="884.70" width="1.20" height="1.30" fill="#8c8c8c" rx="0.00"/>
<rect x="791.10" y="884.70" width="3.00" height="1.30" fill="#8c8c8c" rx="0.00"/>
<rect x="798.30" y="884.70" width="1.20" height="1.30" fill="#8c8c8c" rx="0.00"/>
<rect x="802.70" y="884.70" width="3.00" height="1.30" fill="#8c8c8c" rx="0.00"/>
<rect x="813.80" y="884.70" width="1.20" height="1.30" fill="#8c8c8c" rx="0.00"/>
<rect x="819.20" y="884.70" width="3.00" height="1.30" fill="#8c8c8c" rx="0.00"/>
<rect x="826.40" y="884.70" width="1.20" height="1.30" fill="#8c8c8c" rx="0.00"/>
<rect x="830.80" y="884.70" width="3.00" height="1.30" fill="#8c8c8c" rx="0.00"/>
<rect x="838.00" y="884.70" width="3.00" height="1.30" fill="#8c8c8c" rx="0.00"/>
<rect x="850.50" y="884.70" width="3.00" height="1.30" fill="#8c8c8c" rx="0.00"/>
<rect x="857.70" y="884.70" width="4.50" height="1.30" fill="#8c8c8c" rx="0.00"/>
<rect x="865.40" y="884.70" width="4.50" height="1.30" fill="#8c8c8c" rx="0.00"/>
<rect x="874.10" y="884.70" width="4.50" height="1.30" fill="#8c8c8c" rx="0.00"/>
<rect x="881.00" y="884.70" width="4.50" height="1.30" fill="#8c8c8c" rx="0.00"/>
<rect x="887.90" y="884.70" width="1.20" height="1.30" fill="#8c8c8c" rx="0.00"/>
<rect x="891.50" y="884.70" width="4.50" height="1.30" fill="#8c8c8c" rx="0.00"/>
<rect x="904.80" y="884.70" width="1.20" height="1.30" fill="#8c8c8c" rx="0.00"/>
<rect x="909.20" y="884.70" width="1.20" height="1.30" fill="#8c8c8c" rx="0.00"/>
<rect x="914.60" y="884.70" width="1.20" height="1.30" fill="#8c8c8c" rx="0.00"/>
<rect x="918.20" y="884.70" width="1.20" height="1.30" fill="#8c8c8c" rx="0.00"/>
<rect x="922.60" y="884.70" width="1.20" height="1.30" fill="#8c8c8c" rx="0.00"/>
<rect x="928.00" y="884.70" width="1.20" height="1.30" fill="#8c8c8c" rx="0.00"/>
<rect x="932.40" y="884.70" width="1.20" height="1.30" fill="#8c8c8c" rx="0.00"/>
<rect x="943.70" y="884.70" width="1.20" height="1.30" fill="#8c8c8c" rx="0.00"/>
<rect x="947.30" y="884.70" width="1.20" height="1.30" fill="#8c8c8c" rx="0.00"/>
<rect x="951.70" y="884.70" width="1.20" height="1.30" fill="#8c8c8c" rx="0.00"/>
<rect x="955.30" y="884.70" width="1.20" height="1.30" fill="#8c8c8c" rx="0.00"/>
<rect x="958.90" y="884.70" width="1.20" height="1.30" fill="#8c8c8c" rx="0.00"/>
<rect x="964.30" y="884.70" width="1.20" height="1.30" fill="#8c8c8c" rx="0.00"/>
<rect x="968.70" y="884.70" width="1.20" height="1.30" fill="#8c8c8c" rx="0.00"/>
<rect x="972.30" y="884.70" width="1.20" height="1.30" fill="#8c8c8c" rx="0.00"/>
<rect x="976.70" y="884.70" width="1.20" height="1.30" fill="#8c8c8c" rx="0.00"/>
<rect x="980.30" y="884.70" width="1.20" height="1.30" fill="#8c8c8c" rx="0.00"/>
<rect x="993.90" y="884.70" width="3.00" height="1.30" fill="#8c8c8c" rx="0.00"/>
<rect x="999.30" y="884.70" width="1.20" height="1.30" fill="#8c8c8c" rx="0.00"/>
<rect x="1002.90" y="884.70" width="1.20" height="1.30" fill="#8c8c8c" rx="0.00"/>
<rect x="1008.30" y="884.70" width="4.50" height="1.30" fill="#8c8c8c" rx="0.00"/>
<rect x="1015.20" y="884.70" width="1.20" height="1.30" fill="#8c8c8c" rx="0.00"/>
<rect x="1018.80" y="884.70" width="3.00" height="1.30" fill="#8c8c8c" rx="0.00"/>
<rect x="1024.20" y="884.70" width="3.00" height="1.30" fill="#8c8c8c" rx="0.00"/>
<rect x="1034.50" y="884.70" width="4.50" height="1.30" fill="#8c8c8c" rx="0.00"/>
<rect x="1041.40" y="884.70" width="3.00" height="1.30" fill="#8c8c8c" rx="0.00"/>
<rect x="1046.80" y="884.70" width="1.20" height="1.30" fill="#8c8c8c" rx="0.00"/>
<rect x="1050.40" y="884.70" width="1.20" height="1.30" fill="#8c8c8c" rx="0.00"/>
<rect x="1054.00" y="884.70" width="1.20" height="1.30" fill="#8c8c8c" rx="0.00"/>
<rect x="1057.60" y="884.70" width="3.00" height="1.30" fill="#8c8c8c" rx="0.00"/>
<rect x="1063.00" y="884.70" width="1.20" height="1.30" fill="#8c8c8c" rx="0.00"/>
</svg>
<div class="t" style="left:18.1px;top:650.32px;color:#c4c4c4;font-size:15px;line-height:17.235px;">KDJ(9,3,3)</div>
<div class="t" style="left:97.3px;top:650.32px;color:#dcdcdc;font-size:15px;line-height:17.235px;">K:</div>
<div class="t" style="left:114.4px;top:650.32px;color:#dcdcdc;font-size:15px;line-height:17.235px;">66.27</div>
<div class="t" style="left:159.6px;top:650.32px;color:#dede00;font-size:15px;line-height:17.235px;">D: 48.60</div>
<div class="t" style="left:222.2px;top:650.32px;color:#f000f0;font-size:15px;line-height:17.235px;">J: 101.61</div>
<div class="t" style="left:452.6px;top:75.42px;color:#a8a8a8;font-size:15px;line-height:17.235px;">5.85</div>
<div class="t" style="left:874.9px;top:528.72px;color:#a8a8a8;font-size:15px;line-height:17.235px;">4.88</div>
<div class="t" style="left:-0.3px;top:862.45px;color:#e63232;font-size:15.3px;line-height:17.5797px;">2020</div>
<div class="t" style="left:197.3px;top:862.55px;color:#e63232;font-size:15.3px;line-height:17.5797px;">6</div>
<div class="t" style="left:395.1px;top:862.55px;color:#e63232;font-size:15.3px;line-height:17.5797px;">7</div>
<div class="t" style="left:622.7px;top:862.55px;color:#e63232;font-size:15.3px;line-height:17.5797px;">8</div>
<div class="t" style="left:829.9px;top:862.55px;color:#e63232;font-size:15.3px;line-height:17.5797px;">9</div>
<div class="t" style="left:1045.8px;top:862.55px;color:#e63232;font-size:15.3px;line-height:17.5797px;">10</div>
<div class="t" style="left:1204.4px;top:862.55px;color:#e63232;font-size:15.3px;line-height:17.5797px;">11</div>
<div class="t" style="left:1176.6px;top:824.03px;color:#ffffff;font-size:14px;line-height:16.086px;font-weight:bold;letter-spacing:0.3px">cfchi.com</div>
</body></html>
